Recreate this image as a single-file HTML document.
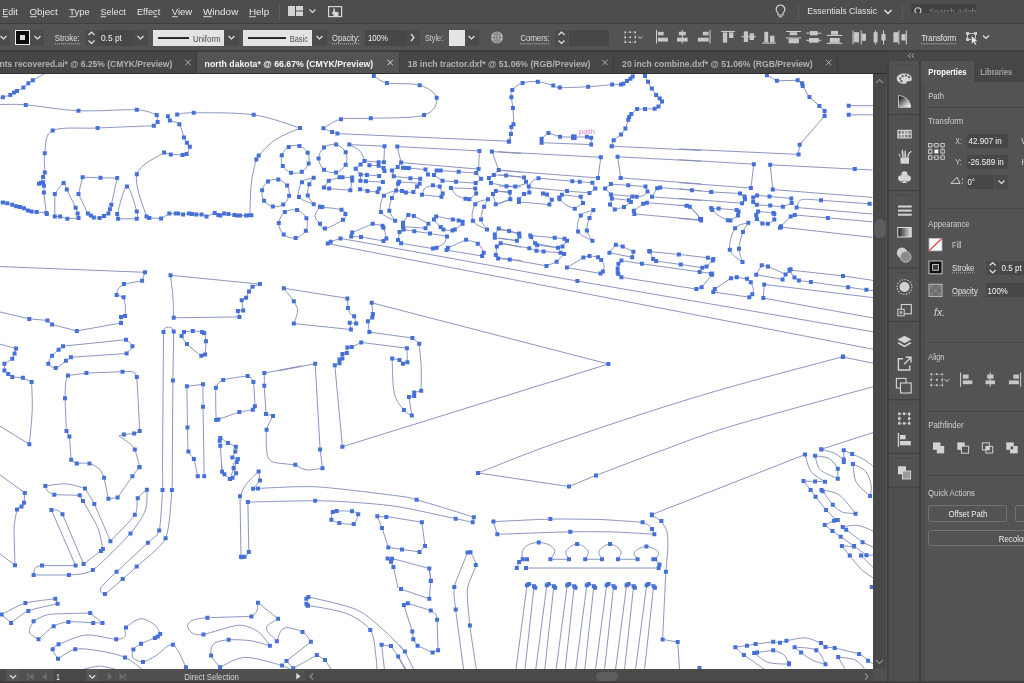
<!DOCTYPE html>
<html><head><meta charset="utf-8"><title>north dakota* @ 66.67% (CMYK/Preview)</title>
<style>
*{box-sizing:border-box;margin:0;padding:0}
html,body{width:1024px;height:683px;overflow:hidden;background:#535353;font-family:"Liberation Sans","DejaVu Sans",sans-serif;font-size:10px;color:#dcdcdc}
.a,.t,.r{position:absolute}
.t{white-space:nowrap}
u{text-decoration:underline;text-underline-offset:1px;text-decoration-thickness:1px}
.du{border-bottom:1px dotted #cfcfcf}
svg{position:absolute;overflow:visible}
</style></head><body>

<div class="r" style="left:0px;top:0px;width:1024px;height:24px;background:#4d4d4d;"></div>
<div class="r" style="left:279px;top:4px;width:1px;height:16px;background:#5c5c5c;"></div>
<div class="r" style="left:798px;top:4px;width:1px;height:16px;background:#5c5c5c;"></div>
<div class="r" style="left:902px;top:4px;width:1px;height:16px;background:#5c5c5c;"></div>
<div class="r" style="left:911px;top:4px;width:65px;height:8.500px;background:#414141;border-radius:1.500px 1.500px 0 0;overflow:hidden"><svg style="left:0;top:0" width="14" height="12"><circle cx="6.900" cy="6.700" r="3" fill="none" stroke="#cfcfcf" stroke-width="1.100"/></svg></div>
<svg style="left:0;top:0" width="1024" height="24"><rect x="288" y="6" width="7" height="10" fill="#d4d4d4"/><rect x="296" y="6" width="7" height="4.500" fill="#d4d4d4"/><rect x="296" y="11.500" width="7" height="4.500" fill="#d4d4d4"/>
<path d="M309.500 9.500 L312.500 12.500 L315.500 9.500" stroke="#dcdcdc" stroke-width="1.200" fill="none"/>
<rect x="328.600" y="6.600" width="13" height="10" fill="none" stroke="#d4d4d4" stroke-width="1.200"/>
<path d="M333.300 8.500 h1.600 v3 l3.600 0.800 v3.700 h-4.600 l-2.200-3.600 l1.600-0.700z" fill="#d4d4d4"/>
<path d="M780.500 5 a4.300 4.300 0 0 1 2.500 7.800 l0 2.200 l-5 0 l0-2.200 A4.300 4.300 0 0 1 780.500 5z" fill="none" stroke="#d6d6d6" stroke-width="1.100"/><path d="M778.800 16.800h3.400" stroke="#d6d6d6" stroke-width="1"/>
<path d="M884.500 10 L888 13.500 L891.500 10" stroke="#e0e0e0" stroke-width="1.500" fill="none"/>
</svg>
<div class="r" style="left:0px;top:24px;width:1024px;height:28px;background:#535353;"></div>
<div class="r" style="left:0px;top:23.3px;width:1024px;height:1.2px;background:#3e3e3e;"></div>
<div class="r" style="left:0px;top:50.3px;width:1024px;height:2px;background:#3e3e3e;"></div>
<div class="r" style="left:85px;top:30px;width:13px;height:16px;background:#4b4b4b;"></div>
<div class="r" style="left:98px;top:30px;width:35px;height:16px;background:#474747;"></div>
<div class="r" style="left:133px;top:30px;width:15px;height:16px;background:#4b4b4b;"></div>
<div class="r" style="left:153px;top:30px;width:71px;height:16px;background:#e3e3e3;"></div>
<div class="r" style="left:224px;top:30px;width:15px;height:16px;background:#4b4b4b;"></div>
<div class="r" style="left:243px;top:30px;width:69px;height:16px;background:#e3e3e3;"></div>
<div class="r" style="left:312px;top:30px;width:15px;height:16px;background:#4b4b4b;"></div>
<div class="r" style="left:364.5px;top:30px;width:41px;height:16px;background:#474747;"></div>
<div class="r" style="left:405.5px;top:30px;width:14px;height:16px;background:#4b4b4b;"></div>
<div class="r" style="left:448.5px;top:30px;width:16px;height:16px;background:#e4e4e4;"></div>
<div class="r" style="left:464.5px;top:30px;width:14px;height:16px;background:#4b4b4b;"></div>
<div class="r" style="left:555px;top:30px;width:13px;height:16px;background:#4b4b4b;"></div>
<div class="r" style="left:569px;top:30px;width:40px;height:16px;background:#474747;"></div>
<div class="r" style="left:0px;top:30px;width:10px;height:16px;background:#4b4b4b;"></div>
<div class="r" style="left:31px;top:30px;width:13px;height:16px;background:#4b4b4b;"></div>
<svg style="left:0;top:24px" width="1024" height="28" viewBox="0 24 1024 28"><g stroke="#e2e2e2" stroke-width="1.200" fill="none">
<path d="M0.500 36 L3.500 39 L6.500 36"/><path d="M34.500 36 L37.500 39 L40.500 36"/><path d="M137.500 36 L140.500 39 L143.500 36"/><path d="M228.500 36 L231.500 39 L234.500 36"/><path d="M316.500 36 L319.500 39 L322.500 36"/>
<path d="M411 34 L414 37.500 L411 41"/><path d="M468.500 36 L471.500 39 L474.500 36"/>
<path d="M88.500 35 L91.500 32 L94.500 35"/><path d="M88.500 40.500 L91.500 43.500 L94.500 40.500"/>
<path d="M558.500 35 L561.500 32 L564.500 35"/><path d="M558.500 40.500 L561.500 43.500 L564.500 40.500"/>
<path d="M983 35.500 L986 38.500 L989 35.500"/>
</g>
<rect x="15.500" y="30.500" width="14" height="14" fill="#0c0c0c" stroke="#e8e8e8" stroke-width="1"/><rect x="20" y="35" width="5" height="5" fill="#dadada"/>
<rect x="158" y="37.200" width="31" height="1.700" fill="#0c0c0c"/><rect x="248" y="37.200" width="38" height="1.700" fill="#0c0c0c"/>
<circle cx="497" cy="37.500" r="6" fill="#b4b4b4"/><path d="M497 31.500v12M491 37.500h12M492.800 33.500c3 2 5.600 2 8.400 0M492.800 41.500c3-2 5.600-2 8.400 0M497 31.500c-4 3-4 9 0 12M497 31.500c4 3 4 9 0 12" stroke="#6a6a6a" stroke-width="0.700" fill="none"/>
<!--GEN-->
<rect x="624.4" y="31.4" width="1.6" height="1.6" fill="#d6d6d6"/>
<rect x="624.4" y="36.4" width="1.6" height="1.6" fill="#d6d6d6"/>
<rect x="624.4" y="41.4" width="1.6" height="1.6" fill="#d6d6d6"/>
<rect x="629.4" y="31.4" width="1.6" height="1.6" fill="#d6d6d6"/>
<rect x="629.4" y="36.4" width="1.6" height="1.6" fill="#d6d6d6"/>
<rect x="629.4" y="41.4" width="1.6" height="1.6" fill="#d6d6d6"/>
<rect x="634.4" y="31.4" width="1.6" height="1.6" fill="#d6d6d6"/>
<rect x="634.4" y="36.4" width="1.6" height="1.6" fill="#d6d6d6"/>
<rect x="634.4" y="41.4" width="1.6" height="1.6" fill="#d6d6d6"/>
<path d="M625.2 32.2h10.0v10.0h-10.0z" fill="none" stroke="#bdbdbd" stroke-width="0.8" stroke-dasharray="1 1.2"/>
<path d="M638.2 36.4l2 2l2-2" fill="none" stroke="#d6d6d6" stroke-width="1"/>
<rect x="656.0" y="29.9" width="1" height="13.6" fill="#d2d2d2"/>
<rect x="657.9" y="31.8" width="5.8" height="3.5" fill="#c6c6c6"/>
<rect x="657.9" y="37.7" width="10.1" height="3.9" fill="#c6c6c6"/>
<rect x="681.8" y="29.9" width="1" height="13.6" fill="#d2d2d2"/>
<rect x="678.8" y="31.8" width="7.0" height="3.5" fill="#c6c6c6"/>
<rect x="677.0" y="37.7" width="10.7" height="3.9" fill="#c6c6c6"/>
<rect x="709.5" y="29.9" width="1" height="13.6" fill="#d2d2d2"/>
<rect x="702.8" y="31.8" width="5.8" height="3.5" fill="#c6c6c6"/>
<rect x="697.9" y="37.7" width="10.7" height="3.9" fill="#c6c6c6"/>
<rect x="721.0" y="30.9" width="14.0" height="1" fill="#d2d2d2"/>
<rect x="722.9" y="32.4" width="4.3" height="10.2" fill="#c6c6c6"/>
<rect x="729.0" y="32.4" width="4.4" height="5.6" fill="#c6c6c6"/>
<rect x="741.3" y="36.2" width="14.7" height="1" fill="#d2d2d2"/>
<rect x="743.8" y="31.4" width="4.2" height="10.6" fill="#c6c6c6"/>
<rect x="749.6" y="33.4" width="4.4" height="6.6" fill="#c6c6c6"/>
<rect x="762.0" y="42.6" width="14.0" height="1" fill="#d2d2d2"/>
<rect x="764.3" y="31.8" width="3.9" height="10.7" fill="#c6c6c6"/>
<rect x="770.0" y="35.7" width="4.5" height="6.8" fill="#c6c6c6"/>
<rect x="786.0" y="31.0" width="15.0" height="1" fill="#d2d2d2"/>
<rect x="786.0" y="37.5" width="15.0" height="1" fill="#d2d2d2"/>
<rect x="789.7" y="32.2" width="7.5" height="3.0" fill="#c6c6c6"/>
<rect x="788.6" y="38.6" width="10.3" height="4.7" fill="#c6c6c6"/>
<rect x="806.2" y="32.7" width="15.0" height="1" fill="#d2d2d2"/>
<rect x="806.2" y="39.8" width="15.0" height="1" fill="#d2d2d2"/>
<rect x="810.0" y="31.0" width="7.6" height="4.4" fill="#c6c6c6"/>
<rect x="809.0" y="38.0" width="9.7" height="4.7" fill="#c6c6c6"/>
<rect x="826.8" y="34.9" width="15.5" height="1" fill="#d2d2d2"/>
<rect x="826.8" y="42.8" width="15.5" height="1" fill="#d2d2d2"/>
<rect x="831.0" y="30.9" width="7.0" height="3.9" fill="#c6c6c6"/>
<rect x="829.8" y="38.0" width="9.9" height="4.8" fill="#c6c6c6"/>
<rect x="852.5" y="30.4" width="1" height="14.0" fill="#d2d2d2"/>
<rect x="860.7" y="30.4" width="1" height="14.0" fill="#d2d2d2"/>
<rect x="853.8" y="32.2" width="5.2" height="10.1" fill="#c6c6c6"/>
<rect x="862.0" y="33.7" width="4.0" height="7.1" fill="#c6c6c6"/>
<rect x="875.1" y="30.4" width="1" height="14.0" fill="#d2d2d2"/>
<rect x="883.0" y="30.4" width="1" height="14.0" fill="#d2d2d2"/>
<rect x="873.6" y="32.2" width="4.0" height="10.1" fill="#c6c6c6"/>
<rect x="881.4" y="34.1" width="4.2" height="6.4" fill="#c6c6c6"/>
<rect x="898.3" y="30.4" width="1" height="14.0" fill="#d2d2d2"/>
<rect x="905.8" y="30.4" width="1" height="14.0" fill="#d2d2d2"/>
<rect x="893.4" y="32.2" width="4.8" height="10.1" fill="#c6c6c6"/>
<rect x="901.4" y="34.1" width="4.2" height="6.4" fill="#c6c6c6"/>
<rect x="967.5" y="33.500" width="8" height="6" fill="none" stroke="#c8c8c8" stroke-width="1"/>
<rect x="966" y="32" width="3" height="3" fill="#c8c8c8"/>
<rect x="974" y="32" width="3" height="3" fill="#c8c8c8"/>
<rect x="966" y="38" width="3" height="3" fill="#c8c8c8"/>
<path d="M971.5 35.500v8.500l2-1.800l1.500 3l1.500-0.800l-1.400-2.800l2.700-0.200z" fill="#e8e8e8" stroke="#535353" stroke-width="0.500"/>
</svg>
<div class="r" style="left:0px;top:52.2px;width:886.5px;height:21px;background:#464646;"></div>
<div class="r" style="left:197px;top:52.2px;width:201.5px;height:20.6px;background:#535353;"></div>
<div class="r" style="left:196.3px;top:52.2px;width:1px;height:20.6px;background:#3e3e3e;"></div>
<div class="r" style="left:398.5px;top:52.2px;width:1px;height:20.6px;background:#3e3e3e;"></div>
<div class="r" style="left:612.5px;top:52.2px;width:1px;height:20.6px;background:#3e3e3e;"></div>
<div class="r" style="left:836.5px;top:52.2px;width:1px;height:20.6px;background:#3e3e3e;"></div>
<svg style="left:0;top:52px" width="886" height="21" viewBox="0 52 886 21"><g stroke-width="1" fill="none"><path stroke="#b4b4b4" d="M185.25 59.800l5.400 5.400M190.75 59.800l-5.400 5.400"/><path stroke="#e0e0e0" d="M387.45 59.800l5.400 5.400M392.95 59.800l-5.400 5.400"/><path stroke="#b4b4b4" d="M602.25 59.800l5.400 5.400M607.75 59.800l-5.400 5.400"/><path stroke="#b4b4b4" d="M825.95 59.800l5.400 5.400M831.45 59.800l-5.400 5.400"/></g></svg>
<div class="r" id="canvas" style="left:0;top:73px;width:873px;height:595.500px;background:#fff;overflow:hidden">
<svg style="left:0;top:0" width="873" height="595" viewBox="0 73 873 595">
<path fill="none" stroke="#808ab8" stroke-width="0.9" d="M-2.9 99.3 C-2 99 0.7 98 2.9 97.2 C5.1 96.5 8.4 95.7 10.3 94.9 C12.1 94.1 12.9 93.2 14.1 92.6 C15.2 91.9 15.4 91.9 17 91.1 C18.6 90.3 21.5 88.9 23.4 87.6 C25.3 86.3 26.9 84.4 28.4 83.2 C30 82 30.2 81.8 32.8 80.3 C35.4 78.7 41.1 75.6 43.9 74.1 C46.8 72.6 48.8 71.9 49.8 71.5 M-1.5 104.6 C3.1 104.6 12.5 103.8 25.8 104.9 C39.1 105.9 60 109.9 78.5 110.7 C97 111.6 123.8 109.1 136.8 109.8 C149.9 110.6 153.4 114.2 156.7 115.1 M156.7 115.1 C156.9 116.3 158.1 120.4 157.6 122.1 C157.1 123.9 154.4 125.1 153.8 125.7 M153.8 125.7 C144.4 126.1 114.4 127.2 97.6 128 C80.7 128.8 61.5 126.4 52.7 130.6 C43.9 134.8 46.1 146.2 44.8 153.2 C43.5 160.2 45.1 168.6 44.8 172.5 C44.5 176.5 43.7 175.2 43.1 176.9 C42.4 178.6 40.9 181.3 41 182.8 C41.2 184.3 43.5 184.1 43.9 185.7 C44.4 187.3 43.6 187.9 43.9 192.5 C44.3 197 45.9 209.6 46.3 213 M39 183.7 L43.1 182.2 M-1.5 201.8 C-0.7 201.9 1.5 202.2 2.9 202.4 C4.4 202.7 5.8 202.9 7.3 203.3 C8.9 203.7 10.8 204.3 12.3 204.8 C13.8 205.3 14.8 205.8 16.1 206.2 C17.4 206.6 18.6 206.8 19.9 207.1 C21.2 207.5 22.7 207.7 24 208.3 C25.3 208.9 26.6 210.1 27.8 210.6 C29.1 211.2 30.2 211.3 31.6 211.5 C33.1 211.7 34.2 211.8 36.6 212.1 C39.1 212.3 44.6 212.6 46.3 213 C48 213.3 46.8 213.9 46.9 214.1 M54.8 216.5 L54.8 193.9 M54.8 193.9 C56.2 192.1 61.6 183.8 63.6 183.1 C65.6 182.4 64.8 185.4 66.8 189.5 C68.8 193.6 73.8 203.7 75.6 207.7 C77.4 211.7 77.1 211.8 77.6 213.6 C78.1 215.3 78.4 217.2 78.5 217.9 M54.8 216.5 L60.1 216.5 L67.4 218.8 L78.5 217.9 M78.5 193.9 L82.6 177.2 M82.6 177.2 L100.5 177.8 L117.2 178.1 M117.2 178.1 C116.2 182.5 112.5 199.6 111.3 204.8 C110.1 209.9 110.4 207.7 109.9 209.2 C109.4 210.6 109.4 212.4 108.4 213.6 C107.4 214.7 105.5 215.2 104 215.9 C102.5 216.6 101.3 217.7 99.6 217.9 C97.9 218.2 95.2 217.8 93.8 217.4 C92.3 217 91.8 216.2 90.8 215.6 C89.8 215 89.9 217.2 87.9 213.6 C85.8 209.9 80.1 197.2 78.5 193.9 M117.2 214.1 C118.8 209.6 123.6 187 126.9 186.6 C130.1 186.2 135.2 206.1 136.8 211.5 C138.5 216.9 136.8 217.6 136.8 218.8 M136.8 218.8 L118.1 218.8 L117.2 214.1 M164.1 152.6 C159.5 156.2 139.7 163.7 136.8 174.3 C133.9 184.9 144.4 209.2 146.5 216.5 C148.6 223.8 148.9 217.7 149.4 217.9 M149.4 217.9 L161.1 218.5 L169.3 213.6 L175.8 213.6 L178.1 213.6 L183.1 214.4 L189 213.6 L191.9 214.1 L196.3 214.4 L201.6 214.4 L206.5 216.5 L214.7 213 L218.3 215 L220.3 215.6 L224.1 213.6 L228.5 214.1 L234.4 215 L237.3 215.6 L240.2 215.6 L246.1 215.6 L251.4 215.3 M164.1 152.6 L170.8 154.4 L182.5 155 L186.6 154.1 M186.6 154.1 C187.2 152.9 189.8 148.7 189.8 146.8 C189.9 144.9 187.9 144.2 186.9 142.7 C185.9 141.1 185.3 140.5 184 137.4 C182.7 134.3 181.6 127 179.3 124.2 C177 121.4 171.8 121.7 169.9 120.4 C168 119.1 168.2 117 167.9 116.3 M177.2 114.5 C180 114.2 180.9 112.7 193.7 112.8 C206.4 112.8 236 112.3 253.7 114.8 C271.4 117.4 292.3 125.8 300 128 M300 128 C295.9 130 282.3 135.1 275.4 139.7 C268.5 144.3 261.9 152.3 258.7 155.5 C255.5 158.8 257.6 154.8 256.3 159.4 C255.1 163.9 252.4 173.5 251.4 182.8 C250.3 192.1 250.1 209.9 249.9 215.3 M373.8 75.9 C375.9 77 379.3 81.3 386.9 82.9 C394.6 84.5 411.4 82.7 419.7 85.2 C428 87.7 436 92.9 436.7 97.8 C437.5 102.8 435.1 111.7 424.1 115.1 C413.2 118.5 384.7 117.7 370.8 118.3 C357 119 348.8 117.6 340.9 119.2 C333 120.9 326.3 126.8 323.4 128.3 M323.4 128.3 L332.1 132.1 L337.4 133.6 M634.5 68.5 C634.2 69.9 633.4 74.7 632.7 76.4 C632.1 78.2 631.4 78 630.4 78.8 C629.4 79.6 628 80.3 626.9 81.1 C625.7 82 624.3 83.2 623.4 83.8 C622.4 84.4 622.9 84.5 621 84.6 C619.2 84.8 617.7 84.3 612.2 84.6 C606.8 85 596.9 86.2 588.2 86.7 C579.5 87.2 565.6 87.8 559.8 87.6 C554 87.4 557 86.5 553.3 85.5 C549.7 84.6 542.9 82.2 537.8 81.7 C532.7 81.3 526.8 81.5 522.6 82.9 C518.3 84.3 514.2 87.5 512.3 89.9 C510.5 92.3 511.3 94.2 511.4 97.2 C511.5 100.3 512.6 103.6 512.9 108.1 C513.3 112.6 513.7 121 513.5 124.2 C513.3 127.4 511.9 125.5 511.4 127.1 C511 128.7 511.2 131.5 510.9 133.9 C510.5 136.2 509.4 140 509.1 141.2 M337.4 133.6 L509.1 141.2 M308.7 163.5 C307.7 166.7 304.7 170.2 301.8 171.8 C298.9 173.3 294.2 173.8 291.1 172.8 C287.9 171.8 284.3 168.8 282.8 165.9 C281.2 163 280.8 158.4 281.8 155.2 C282.8 152 285.7 148.5 288.7 146.9 C291.6 145.4 296.2 144.9 299.4 145.9 C302.6 146.9 306.1 149.9 307.7 152.8 C309.2 155.7 309.6 160.3 308.7 163.5Z M289.1 195.8 C288.5 199 285.9 202.7 283.2 204.5 C280.5 206.3 276.1 207.2 272.9 206.5 C269.7 205.9 265.9 203.4 264.1 200.7 C262.3 197.9 261.5 193.5 262.1 190.3 C262.8 187.1 265.3 183.4 268 181.6 C270.7 179.8 275.2 178.9 278.3 179.6 C281.5 180.2 285.3 182.7 287.1 185.4 C288.9 188.1 289.7 192.6 289.1 195.8Z M305.8 230.7 C304 234 299.3 237.3 295.7 237.9 C292 238.6 286.5 237 283.7 234.6 C280.9 232.1 278.7 226.8 278.8 223.1 C279 219.3 281.8 214.3 284.8 212.1 C287.9 210 293.5 209 297.1 210 C300.7 211 305 214.8 306.4 218.3 C307.9 221.7 307.6 227.4 305.8 230.7Z M313.7 177.8 C311.7 178.5 304.4 179 302 182.2 C299.5 185.4 297.1 193.2 299 196.9 C301 200.5 311.2 203 313.7 204.2 M313.7 177.8 C313 178.9 310.3 181.3 309.3 184.3 C308.3 187.2 307.1 192.1 307.8 195.4 C308.6 198.7 312.7 202.7 313.7 204.2 M345.7 164.7 C344.1 168.1 339.7 171.6 336 172.4 C332.4 173.2 326.9 172 324 169.7 C321.1 167.3 318.6 162.2 318.6 158.5 C318.6 154.8 321.1 149.7 324 147.4 C326.9 145 332.5 143.8 336.1 144.6 C339.7 145.5 344.1 149 345.7 152.3 C347.4 155.7 347.3 161.4 345.7 164.7Z M349.3 144.6 L384.5 146.2 L383.9 162.2 M349.3 144.6 C351.1 145.7 357.5 148.4 360 151.1 C362.6 153.8 363.8 159.2 364.5 160.9 M364.5 160.9 L378.6 162.2 L383.9 162.2 M364.5 160.9 L360.6 164.6 L355.7 168.7 L360.6 174.5 M369.4 165.2 L378.6 165.7 L383.5 168.1 L384.5 171 M360.6 174.5 L366.9 174.9 L379.2 175.9 M360.4 180.8 L365.9 181.2 L382.9 182.1 M360.6 174.5 L360.4 180.8 M360 189.2 L367.5 190.9 L377.6 192.1 L379.2 188.6 M328.8 180.8 L339.5 177.3 L342.5 177.3 L352.2 177.5 L352.2 180.4 L350.3 190.2 L329.2 188.6 L323.9 187.6 L328.8 180.8 M397.3 146.6 L479.4 150.9 L478.6 169.1 M397.3 146.6 L401.1 162.6 L478.6 169.1 M401.1 162.6 L397.7 167.1 L391.9 170.6 L393.8 176.3 L410.4 178.2 L420.2 178.8 L419.6 183.7 L417.1 186.6 L413.4 192.1 L405.9 192.5 L402 191.1 L396.2 190.5 M403 167.7 L405.9 168.1 L408.9 168.1 L425.5 169.6 L428 174.5 M399.1 181.8 L398.1 183.7 L396.2 190.5 M399.1 181.8 L417.1 183.1 M433.9 174.9 L436.6 170.6 L440.7 170.6 L458.7 171.8 L476.2 173 L481.1 178.8 L475.7 183.1 M433.9 174.9 L442.5 180.8 L456.1 181.8 L475.7 183.1 M422 194.8 C422.4 193.8 422.7 190.2 424.5 188.6 C426.3 187 431.5 185.8 432.9 185.3 M432.9 185.3 L439.7 186.6 L442.7 193.5 L441.5 196.8 L422 194.8 M450.9 188 C451.8 189.2 454.3 193.6 456.7 195.4 C459.2 197.2 464 198.2 465.5 198.8 M465.5 198.8 L469.4 199.3 L476.2 193.5 L475.3 188.6 L450.9 188 M491.9 151.5 L521.2 153.6 M491.9 151.5 L498.7 170 L493.8 174.9 L488.9 177.9 L490.9 183.1 L506.5 186.2 L515.3 186.6 L521.2 187 M498.7 170 L521.2 172.2 M493.8 174.9 L506.1 175.5 L521.2 176.9 M495.8 190.9 L509.8 192.1 L510.4 199.3 L495.8 204.2 L492.9 194.1Z M488 199.3 C485.9 200.1 477.8 200.6 475.3 204.2 C472.8 207.8 471 216.6 472.9 220.8 C474.9 225.1 484.6 228.1 487 229.6 M488 199.3 C487.3 200.6 485.2 203.4 484.1 206.8 C482.9 210.1 480.6 215.6 481.1 219.5 C481.6 223.3 486 227.9 487 229.6 M396.2 190.5 C394.1 191.4 386.4 192.2 383.9 195.8 C381.3 199.4 379 207.9 380.9 212 C382.8 216.2 392.8 219.4 395.2 220.8 M396.2 190.5 C395.5 191.8 393 194.6 391.9 198 C390.7 201.3 388.8 206.9 389.3 210.7 C389.9 214.5 394.2 219.1 395.2 220.8 M320 206.8 C321.2 205.3 318.8 206.7 322.3 207.1 C325.9 207.6 337.6 208.5 341.5 209.7 C345.3 210.8 345.1 212.3 345.4 214 C345.7 215.7 346.5 217.4 343 219.8 C339.6 222.3 328.7 228 324.9 228.6 C321 229.3 321.6 225.9 320 223.8 C318.4 221.6 315.1 218.8 315.1 215.9 C315.1 213.1 318.8 208.2 320 206.8Z M352.2 232.5 L372.7 223.8 L382.5 225.7 L383.5 227.7 M383.5 227.7 C384 229.4 386.4 236.2 386.4 238.4 C386.4 240.6 384 240.5 383.5 240.9 M383.5 240.9 L361 237 L351.2 236.4 L352.2 232.5 M408.3 215 C409.2 215.1 410.4 214.5 413.8 215.9 C417.1 217.4 426 222.4 428.4 223.8 M428.4 223.8 L425.5 228.2 L403 226.7 M408.3 215 L403 222.8 L403 226.7 L403.6 229.6 L399.5 232.1 L398.1 240 L401.1 243.3 L432.9 248.6 L436.6 247.8 M436.6 247.8 C437.8 247 442.3 245.2 444 243.3 C445.7 241.4 446.5 237.6 447 236.4 M447 236.4 L430 233.5 L414.3 231.2 L403.6 229.6 M433.9 219.5 C433.4 218.4 434.3 216.5 436.2 216.5 C438.1 216.5 450.6 219.1 452.8 219.5 C455.1 219.8 457.7 220.2 458.7 220.4 C459.6 220.7 462.2 221.5 462.6 221.8 C463 222.1 463.4 223 462.6 223.8 C461.8 224.5 455.8 228.9 454.8 229.6 C453.8 230.3 453.6 230.6 452.4 230.6 C451.3 230.6 444.6 230 443.4 229.6 C442.3 229.3 441.7 228.1 440.7 227.1 C439.7 226.1 434.3 220.5 433.9 219.5Z M446.6 250.1 L447.9 247.8 L466.1 239.8 M466.1 239.8 C468 240.4 474.9 241.5 477.8 243.7 C480.7 245.8 483 250.6 483.7 252.7 C484.4 254.7 482.4 255.4 482.1 256 M482.1 256 L446.6 250.1 M498.7 228.6 L509.1 231 L519.2 233.5 M498.7 228.6 L494.8 234.5 L494.8 237.8 L516.9 240.7 M521.2 247.2 L500.7 243.3 L496.8 246.6 L495.8 255 L498.1 258.5 L509.8 259.5 L521.2 260.5 M511.1 133.9 L508.8 141.7 M541.6 142.7 L591.2 144.6 L591.2 137.8 L586.9 136.8 L573.8 137.2 L560 136.8 L548.4 132.9 M548.4 132.9 C547.9 133.4 542.2 138 541.6 138.8 C541 139.6 541.6 142.4 541.6 142.7 M498 151.7 L600.8 157.3 L598 177.9 L498 170.2 M701.2 161.2 L617.6 156.8 L620.7 177.9 L701.2 183.9 M611.9 146.2 L701.2 150.5 M499 174.9 L505.9 175.5 L524 177.5 L526 181.8 L528.7 186.6 L529.3 192.5 L524 194.1 L518.9 199.3 L518.9 201.9 L549.4 204.6 L551.8 199.7 L546.9 194.5 L543 193.5 M528.7 186.6 C529.3 185.7 530.6 182.6 532.2 181.2 C533.9 179.8 537.4 178.7 538.5 178.2 M538.5 178.2 L572.3 181.2 L579.7 181.8 L592.4 182.7 L595.3 188.6 L589.5 192.9 L567 191.1 L529.3 187.6 M499 186.1 L506.4 186.2 L515.2 186.6 L526 183.7 M499 191.5 L509.8 192.5 L510.2 199.3 L499 203.8 M561.9 194.8 L559.2 197.4 L559.6 199.3 M561.9 194.8 L580.7 196.8 L583 202.9 L574.8 208.7 M559.6 199.3 C560.7 200.3 563.9 203.6 566.4 205.2 C568.9 206.8 573.4 208.1 574.8 208.7 M593.4 210.1 C591.2 211 583.2 212 580.7 215.5 C578.1 219.1 576.2 227.4 578.1 231.6 C580.1 235.8 590 239.2 592.4 240.7 M593.4 210.1 C592.7 211.4 590.5 214.5 589.5 217.9 C588.4 221.3 586.4 226.8 586.9 230.6 C587.4 234.4 591.5 239 592.4 240.7 M610.9 184.1 L605.1 188.6 L610.9 194.5 L611.9 198.4 L610 204.6 L614.8 209.5 L624 207.1 L630.9 201.9 L628.9 200.3 M610.9 184.1 L628.3 185.3 L645.5 186.6 L647.5 191.5 M647.5 191.5 C646.8 192.2 645.3 194.6 643.6 195.4 C641.8 196.3 638.6 196.6 636.7 196.8 C634.9 197 633.1 196.5 632.4 196.4 M610.9 194.5 L632.4 196.4 M611.9 198.4 L628.9 200.3 M660.2 187.6 L657.2 188.2 L652 196.8 L701.2 200.5 M660.2 187.6 L692 190.2 L701.2 190.9 M634.4 214 L633.8 210.7 L643.2 203.8 L646.9 202.7 L686.5 205.8 L689.8 206.8 M689.8 206.8 C690.9 207.8 694.6 211 696.3 213 C698 215 699.4 217.9 700 218.9 M634.4 214 L701.2 220 M499 229.6 L508.8 231 L518.9 234.1 L519.5 236.4 L517 240.7 L499 238 M530.3 235.5 L554.7 237.8 L564.5 238.8 L567 240.7 L562.5 246.6 L558 247.8 L535.2 243.3 L531.2 237 L530.3 235.5 M535.2 243.3 L537.1 245.2 L558 247.8 M499 242.9 L529.3 248.2 L536.5 250.7 L543.6 251.5 L560.5 252.7 L564.1 254 L556.6 261.8 L546.5 265.9 M499 257.9 L509.8 259.3 L546.5 265.9 M609.4 252.7 L615.8 244.8 L622.7 246.6 L633.4 251.7 L632.2 257.3 L609.4 252.7 M566.9 267.6 L583.4 257.5 M583.4 257.5 C584.4 257.3 587 256 589.5 256 C591.9 255.9 596.1 256.7 598 257.3 C600 258 600.2 258.5 601.2 259.9 C602.2 261.3 603.8 263.8 604.1 265.7 C604.4 267.7 603.1 270.5 602.9 271.4 M679 148.9 L798.6 154.4 M679 159.7 L753.8 164.2 L750.9 188 L679 182.7 M872.4 170 L854.8 169.1 L770.2 164.8 L772.8 189.6 L872.4 197.4 M679 188.6 L692.1 190.2 L711.2 191.9 L740 193.5 L744.5 196.4 L745 199.3 L742.1 203.2 L679 198.4 M679 205.2 L686.8 205.8 L689.8 206.8 L701.1 218.9 L701.1 220.4 L679 218.5 M711.2 208.1 L712.2 210.1 M711.2 208.1 L718.7 208.5 L736.6 210.1 L738.6 211.6 L738 215.5 L730.4 220.4 L727.9 220.2 M712.2 210.1 C713.4 211.1 716.5 214.2 719.1 215.9 C721.7 217.6 726.4 219.5 727.9 220.2 M757.1 195.4 L753.2 197.4 L753.2 201.9 L756.8 204.8 L770.2 205.6 L782.9 206.8 L791.7 202.9 L791.3 198.4 L769.5 196.4 L757.1 195.4 M758.1 211.6 C756.1 211.9 756.3 214.1 756.2 215 C756 215.8 756 217.9 756.8 218.9 C757.5 219.8 761.1 222.8 762.4 223.4 C763.7 223.9 766.5 224.2 767.9 223.8 C769.3 223.3 773.6 220.6 774.3 219.5 C775.1 218.3 774.4 214.7 774.3 214 C774.2 213.2 775.3 213.3 773.4 213 C771.5 212.7 760.1 211.4 758.1 211.6Z M748.4 222.8 C746.1 223.7 738.2 223.8 735.1 228.2 C732 232.7 728.6 244.1 729.8 249.7 C731 255.4 740.4 260 742.5 262 M748.4 222.8 C747.4 224.3 744.5 227.8 742.9 232.1 C741.3 236.5 739 243.8 739 248.8 C738.9 253.7 741.9 259.8 742.5 262 M796.6 207.5 C797 206.5 797.7 202.7 799.1 201.3 C800.5 199.9 801.4 199.5 805 199.3 C808.6 199.2 818.3 200.1 821 200.3 M821 200.3 L869.5 203.8 L872.4 204 M796.6 207.5 L872.4 214 M780 227.7 L781 226.3 L790.7 216.5 L794.8 215 L827.9 217.9 L872.4 221.8 M781 227.1 L872.4 237.4 M611.6 146.2 C611.8 145.6 612.8 141.5 613.7 140.3 C614.6 139.1 619.8 135.6 621 134.5 C622.2 133.3 624.7 130.1 625.4 128.6 C626.1 127.1 628 121 628.3 119.8 C628.7 118.6 628.9 117.5 629.2 116.9 C629.5 116.3 630.5 114.7 631.3 113.9 C632.1 113.2 636.5 109.5 637.1 109 M637.1 109 L645 109 L654.7 108.7 M654.7 108.7 C655.1 108.5 657.8 107.3 658.5 106.6 C659.2 105.9 661.9 102.5 662 101.6 C662.1 100.8 660.3 99.1 659.7 98.4 C659.1 97.7 657 95.9 656.2 94.9 C655.4 93.9 652.6 89.8 651.8 88.5 C651 87.1 648.6 83 648 81.7 C647.3 80.5 645.4 77.2 645 75.9 C644.6 74.5 644 69.3 643.9 68.5 M761.6 71.5 C762.5 72.1 764.4 73.7 766.9 75.3 C769.5 76.8 775.2 79.9 776.9 80.8 M776.9 80.8 L797.7 80.3 L802.1 83.2 L802.7 86.1 L809.4 97 L819.4 106 L824.6 111 L824.6 116 L799.7 144.7 L798.3 154.4 M873 105.7 L848.7 105.7 M873 114.8 L848.7 114.8 M-1.5 266.5 L145 272.3 L142.1 280.8 L123.9 284.1 M123.9 284.1 C122.9 284.9 119.3 287.2 118.1 289 C116.8 290.8 116.8 293.9 116.6 294.9 M116.6 294.9 L123.6 297.2 M123.6 297.2 C123.9 298.8 125.1 303.5 125.4 306.6 C125.6 309.7 125.1 314.4 125.1 316 M125.1 316 L121 316.9 L121 323 L76.8 330.9 L52.1 324.5 L47.5 320.4 L29.3 318.9 L-1.5 311.6 M170.5 275.3 L259.9 284.1 L252.5 286.7 L249 291.4 L246.1 297.8 L241.7 300.2 L243.2 310.4 L237.9 311 L239.4 316.9 L173.7 317.8 M173.7 317.8 C173.6 314.2 173.4 303.4 172.9 296.4 C172.3 289.3 170.9 278.8 170.5 275.3 M-1.5 343.8 L16.1 348.5 L14.6 353.5 L12.3 358.8 L4.4 363.8 L4.4 370.5 L8.2 374 L12.3 376.9 L22.9 377.8 L31.6 381.9 M31.6 381.9 C31.7 386.7 32.6 400.2 32.2 410.6 C31.8 421 29.8 438.7 29.3 444.3 M29.3 444.3 L-1.5 425.3 M63 346.2 L126 339.7 M126 339.7 C127.1 340.8 132.3 343.9 132.4 346.2 C132.5 348.5 127.5 352.3 126.6 353.5 M126.6 353.5 L70.9 357.3 L65.9 360.8 M65.9 360.8 C64.6 361.8 58 367.8 55.7 368.1 C53.3 368.5 48.8 365.4 48.3 363.8 C47.9 362.1 50.8 357.7 52.1 355.8 C53.5 354 57.1 351 58.6 349.7 C60 348.4 62.4 346.6 63 346.2 M65 398.3 C65.1 397 65.4 384.7 65.6 382.8 C65.9 380.9 67.8 376.1 68 375.5 M68 375.5 L86.4 373.1 L122.5 371.7 M122.5 371.7 C124.3 371.7 130.9 371.1 133.3 372 C135.7 372.8 136.2 376.1 136.8 376.9 M136.8 376.9 C136.9 379 138 397.3 138.3 401.8 C138.5 406.4 139.6 428.7 139.7 431.1 M139.7 431.1 L134.2 433.5 L123.9 434.6 L118.9 436.1 M118.9 436.1 C120.3 437 126.8 441.1 128.9 442.9 C131 444.6 133.3 446.4 134.8 449.6 C136.2 452.8 139.1 464.6 139.7 466.9 M65 398.3 C65.1 400.5 66.2 428.6 66.5 431.1 C66.8 433.7 69.1 434.5 69.4 436.4 C69.7 438.3 70.7 458 71.2 459.8 C71.7 461.6 76.4 463.1 76.8 463.4 M162.5 465 L163.5 332.1 M163.5 332.1 C163.7 331.5 163.8 329.1 164.6 328.3 C165.5 327.5 167.2 327.1 168.5 327.1 C169.7 327.1 171.4 327.6 172.3 328.3 C173.1 329 173.5 331 173.7 331.5 M173.7 331.5 L172.9 380.4 L172.3 465 M184 332.1 C182.9 332.6 181.3 334.7 181.6 335.9 C181.9 337.1 185 342.1 186.9 344.1 C188.9 346.1 199.5 354.8 201.3 355.8 C203.1 356.9 204.6 355.8 205.1 354.4 C205.5 352.9 206 343.3 206 341.2 C205.9 339.1 204.6 333.9 204.2 333 C203.8 332.1 203.3 332.3 202.1 332.1 C201 331.9 194.6 330.9 192.8 330.9 C191 330.9 185.1 331.6 184 332.1Z M186.9 386.3 L203 384.3 M203 384.3 C203 385.4 203 402.2 203 406.8 C203.1 411.4 204.1 472.8 204.2 476.2 M186.9 386.3 C187 389.8 187.4 422.2 187.5 427.6 C187.6 433.1 187.8 449 188.4 451.6 C188.9 454.3 193.2 456.9 193.9 459 C194.7 461 197.4 474.8 197.8 476.2 M223.2 379.9 C225.9 378.9 245 375.9 247.6 376.1 C250.1 376.2 252.8 379.4 253.4 381.9 C254 384.4 254.9 403.9 254.9 406.2 C254.8 408.5 254.1 409.3 252.8 409.7 C251.5 410.2 242.2 411.3 239.4 412.1 C236.5 412.9 220.2 418.8 218.3 419.4 C216.3 420.1 216.4 422.6 216.2 420 C216 417.4 215.3 391.1 215.9 387.8 C216.5 384.4 220.6 380.8 223.2 379.9Z M301.8 365.8 L264.3 373.1 L264.3 385.7 M264.3 385.7 L266 414.1 M266 414.1 L273 415.9 M273 415.9 C272.3 417.5 267.3 425.3 266.6 429.7 C265.9 434 266.2 449.3 266.9 453.1 C267.6 456.9 269.1 460.5 272.5 461.9 C275.8 463.3 292.6 464.5 295.3 464.8 M220.3 437.9 L219.7 440.8 L220.3 445.8 M220.3 437.9 L227.9 442.9 L235.8 446.7 L235.3 451.6 L232.3 457.5 L237.9 459 L236.7 461.9 L233.8 468.3 L231.4 475.1 M220.3 445.8 L222.1 471.9 M283.8 288.2 L347.4 298.4 L348 308.1 M348 308.1 C348.4 309.1 349.3 312.6 350.3 313.9 C351.3 315.3 353.5 315.9 354.1 316.3 M354.1 316.3 L356.2 323.6 L349.7 322.7 L350.9 329.5 L293.8 323.6 M293.8 323.6 C294.4 321.5 297.6 314.7 297.6 311 C297.6 307.3 296.1 305.2 293.8 301.3 C291.5 297.5 285.5 290.4 283.8 288.2 M371.7 302.8 L608.4 364 M371.7 302.8 L372.9 313.9 L372.3 317.5 L367.9 321.3 L369.4 332.1 L412.4 338 L419.2 343.8 M419.2 343.8 C419.3 345.4 421.1 363.6 421.2 366.7 C421.3 369.8 421.2 389.1 421.2 390.7 M421.2 390.7 L414.2 392.5 L414.2 396 L408.9 396.9 L411.8 415.6 M411.8 415.6 C410.5 414.7 406.9 413.8 403.9 410 C401 406.3 396.2 401.6 394.3 393 C392.3 384.5 392.5 364.2 392.2 358.5 M392.2 358.5 L399.5 359.9 L403 363.8 L407.4 362.3 L406.9 348.2 L361.2 342.4 L351.8 347.1 L347.4 347.6 L346.8 352.9 L342.4 354.1 L342.4 358.5 L339.5 359.4 L339.5 363.2 L334.8 365.2 L342.4 446.7 L608.4 364 M278.5 370.8 L315.2 363.8 L320.1 449.6 L322.5 468.3 M322.5 468.3 C319.8 468.6 310.9 470.4 306.4 469.8 C301.8 469.2 297.1 465.7 295.2 464.8 M566.9 267.6 L600.5 273.5 L602.9 271.5 M713.3 292 L714.8 289 L730.9 278.2 L736.7 277.3 L747 278.8 L750.8 282.3 M750.8 282.3 C751.2 283.4 753.2 287 753.4 289 C753.7 291 752.5 293.4 752.3 294.3 M752.3 294.3 L749.3 297.2 L713.3 292 M842.8 357 L873 363.2 M651.8 514.6 L805 454.6 M873 432.6 L821.1 449.3 M478 473 C491.7 467.8 522.9 454.5 560 441.6 C597.1 428.7 653.4 409.8 700.6 395.6 C747.8 381.4 819.4 363.1 843.1 356.6 M327.8 243.5 L330.7 241.7 L340.5 238.4 L577.4 281.1 L900 336.4 M327.8 243.7 L900 354.5 M478 473 L569 486.5 L596 475.4 M596 475.4 C607.2 471.2 640.5 458.2 663.1 450 C685.8 441.8 697 436.5 731.9 426 C766.8 415.5 844.5 394.6 872.5 386.9 C900.5 379.2 895.4 381 900 379.8 M-1 474.2 L24.8 492.9 L24 502.7 L21.5 506.6 L17 509.5 M17 509.5 C16.7 511.3 14.3 521.9 14.1 527.5 C13.9 533.1 14.9 561.4 15 565.2 M15 565.2 L-1 553.3 M45.3 485.9 C48.8 485.6 59.8 483.5 66.4 483.9 C73 484.4 81.9 487.7 85 488.4 M85 488.4 C85.9 490 91.8 498.8 94.3 504.1 C96.9 509.3 108.8 537.5 110.4 541.2 M110.4 541.2 C113.6 537.7 131.1 520.5 134.8 514.8 C138.4 509.1 136.1 501.5 137.7 498.2 C139.3 494.9 145.7 490.9 146.9 489.8 M146.9 489.8 C146.7 492.5 147.7 504.1 145.5 509.9 C143.3 515.7 137.5 525.4 130.5 533.4 C123.4 541.4 101 564.3 92.8 569.9 C84.6 575.4 72.1 574.3 68.9 575 M68.9 575 L33.6 575 M33.6 575 C33.9 573.7 34.1 569.1 35.5 567.5 C36.9 566 40.9 565.9 42 565.6 M42 565.6 L75.6 565.6 L51.4 509.9 M51.4 509.9 C52.4 510 55.8 509.6 57.6 510.3 C59.5 511 61.7 513.6 62.5 514.2 M62.5 514.2 L83.6 564 M83.6 564 C85 562.9 99.4 552.2 101 550.9 C102.6 549.7 102.8 549.1 102.9 549 M102.9 549 C102.2 546.1 100.3 533.9 97.7 527.5 C95 521.1 85 504.6 83 501.1 M83 501.1 L79.7 495.3 L54.3 494.7 M54.3 494.7 C53.2 494.1 49.3 492.8 47.9 491.4 C46.4 489.9 45.7 486.8 45.3 485.9 M76.8 463.4 C78.5 463.4 86.4 462.7 89.5 463.4 C92.5 464.2 97.7 467.4 99.6 469.3 C101.6 471.2 103.5 476.6 104.1 477.7 M104.1 477.7 L108.4 498.8 L117.6 497.6 M117.6 497.6 C119.6 494.8 129.5 480.4 132.4 476.3 C135.3 472.3 138.3 468.5 139.3 467.3 M162.5 465 C162.5 467.9 162.9 482.4 162.5 490 C162.1 497.6 160.9 524.3 159.2 530.4 C157.5 536.6 152.8 537.9 147.9 542.7 C142.9 547.6 122.1 566.5 116.6 571.8 C111.1 577.1 102 585.5 100.6 588 C99.2 590.6 102.3 595 104.9 593.9 C107.5 592.8 118.9 582.1 122.7 578.9 C126.4 575.7 131.7 571.3 136.7 566.6 C141.7 561.8 161.5 547.2 165.6 538.2 C169.7 529.3 171.1 498.5 171.9 490 C172.6 481.5 172.2 467.9 172.3 465 M1.6 614.5 C4.7 612.9 18.2 605.2 25.4 603.1 C32.6 601 51.3 599.4 55.3 598.8 M55.3 598.8 L57.6 603.7 M57.6 603.7 C53.7 604.7 34.5 608.4 28.3 610.9 C22.1 613.5 13.4 621.3 11.1 622.9 M11.1 622.9 L1.6 614.5 L-1 615.4 M33.6 621.3 C35.4 620.5 42.2 615.4 48.8 614.5 C55.4 613.5 85.4 613.2 90.2 613.1 M90.2 613.1 L102.5 622.9 L93.2 622.9 M93.2 622.9 C89.9 622.7 73.6 621.4 68.4 621.9 C63.1 622.3 57.7 623.9 53.7 626.2 C49.7 628.5 40.5 637.5 38.5 639.3 M38.5 639.3 C36.9 638.1 30.1 635 29.3 632 C28.5 629 32.9 623.1 33.6 621.3 M58.6 644.3 C62.7 642.9 77.3 635.7 85.9 635 C94.6 634.2 110.4 639.1 116.2 639.3 C122.1 639.4 123.5 637.7 125 635.9 C126.5 634.2 123.6 630.1 126 627.5 C128.3 625 136.2 619.1 140.6 618.8 C145 618.4 152.3 622.9 155.3 625.2 C158.2 627.5 159.4 632.7 160.2 634 M160.2 634 L157.8 636.5 L154.9 637.9 M154.9 637.9 C152.8 638.8 144.2 642 141 643.8 C137.8 645.5 134.6 647.6 133.4 649.6 C132.2 651.7 131.4 655.6 132.8 657.4 C134.2 659.3 139.5 662.2 143 661.9 C146.5 661.6 151.8 658 156.2 655.5 C160.7 652.9 168.4 643 172.9 644.7 C177.3 646.5 183.6 662.6 185.9 667.2 C188.3 671.7 188.1 673.8 188.5 675 M58.6 644.3 C57.6 645.1 52.8 646.8 52.7 649.2 C52.6 651.6 57.1 657.2 58 658.8 M58 658.8 C60.6 657.4 69.2 650.4 75.2 649.2 C81.1 648 90.2 649.4 97.7 650.6 C105.1 651.8 118 654.3 125 657.4 C132 660.5 141.6 669 144.5 671.1 M84 669.1 C86.6 668.7 94.4 666.2 99.6 666.2 C104.8 666.2 112.6 668.7 115.2 669.1 M221.5 463 L222.1 471.8 L224.4 474.2 L229.9 479.1 L232.6 477.7 L236.1 473.2 L233.6 467.9 L233.2 463 M258.6 471.4 C256.5 473.6 249 480.4 245.9 484.5 C242.8 488.7 241 494.3 240 496.2 M240 496.2 L241 556.8 L241.6 557.2 L244.5 556.8 L245.9 556.8 L248.8 551.9 L247.9 502.1 M247.9 502.1 C256.8 501.9 300.8 500.7 315.2 500.7 C329.7 500.8 344.9 501.7 356.2 502.5 C367.6 503.3 386.7 504.8 400 507 C413.3 509.2 446 516.7 455.7 518.7 C465.4 520.7 470.4 521.8 472.7 522.2 M258.6 471.4 L260 480.6 L253.1 488.8 L258 488.4 M258 488.4 C265.9 488.2 298.3 485.8 317.2 486.9 C336.1 487.9 386.7 494.5 400 496.2 C413.3 498 409.4 497.8 416.6 499.8 C423.8 501.7 446.3 508.6 453.9 510.9 C461.5 513.2 471.2 516.5 473.8 517.3 M473.8 517.3 L472.7 522.2 M332.8 511.9 C333.3 511 334.8 511 336.7 510.9 C338.6 510.8 349.8 511 352 511.3 C354.1 511.6 358 512.9 358.2 514.2 C358.4 515.5 355.6 523.1 353.7 524 C351.8 524.9 341.5 523.4 339.3 523 C337 522.6 332.1 520.8 331.4 519.7 C330.8 518.6 332.3 512.8 332.8 511.9Z M251.4 616.4 C245.5 616.6 215.3 617.3 207.4 617.8 C199.5 618.3 194.8 619.2 192.2 620.3 C189.5 621.4 187.5 624.5 187.5 626.2 C187.5 627.9 190.1 631.9 192.2 633 C194.3 634.1 197.3 635.4 203.5 634.4 C209.8 633.3 231.7 625.5 239.1 625.2 C246.4 624.9 254.5 629.3 258.6 632 C262.7 634.8 268.4 643.9 269.9 645.7 M251.4 616.4 C252.2 615.6 255.5 613.8 256.6 611.5 C257.7 609.2 257.8 604.2 258 602.7 M258 602.7 L278.1 618.8 M278.1 618.8 C276.2 620.3 266.6 624.4 266.4 628.1 C266.2 631.9 275 639 276.8 641.2 M276.8 641.2 C278 639 279.7 629.7 284 628.1 C288.3 626.6 298 629.8 302.5 632 C307 634.3 309.5 640.2 310.9 641.8 M310.9 641.8 L286.5 660.9 L293.2 668.2 M293.2 668.2 C295.9 666.7 305.4 661.6 309.4 659.4 C313.3 657.2 315.6 655.6 316.8 654.9 M316.8 654.9 L325 660 L331.8 670.1 M269.9 645.7 C267.1 645 257 641.7 250.8 640.8 C244.6 639.9 234.3 639.4 228.7 639.8 C223.1 640.3 216.3 641.4 213.7 643.8 C211 646.1 210.2 652 211.1 655.5 C212.1 659 218.8 665.4 220.1 667.2 M220.1 667.2 C223.8 665.7 235.6 657.7 244.9 657.4 C254.2 657.2 274.4 663.3 282 665.6 C289.6 668 293.7 671.9 295.7 673 M308.4 596.9 C315.6 598.8 345 604.6 356.2 609.6 C367.5 614.6 376.6 624.1 383.6 630.1 C390.6 636.1 400.2 646.7 403.1 649.6 M308.4 596.9 L306.4 598.8 M306.4 603.7 L308 605.7 M307.4 605.3 C313.3 606.5 337.1 609.8 346.5 613.5 C355.9 617.2 365.9 623.8 370.3 630.1 C374.7 636.4 374.8 649.3 375.8 655.5 C376.8 661.6 376.8 668.8 377 671.1 M384.6 671.1 L381.6 644.7 L391 646.1 L398.2 656.4 L407 671.1 M384.4 516.2 L421.9 522.2 L425 546.1 L419.5 551.9 L402 549.4 L388.3 547.4 M388.3 547.4 L382 527.9 L377.3 516.2 M377.3 516.2 L386.3 517.1 M387.5 558.4 L392 558.8 L399 560.3 L429.3 568.5 L430.9 580.8 M387.5 558.4 L391 561.7 L393.4 567 L398 588 M493.4 521.6 L497.3 534.3 M493.4 521.6 C499.1 521.4 539.7 519.3 550.4 519.1 C561.1 518.9 590.8 519.2 600 519.5 C609.2 519.8 638.3 522 642.6 522.2 M497.3 534.3 C504.6 534.1 558.6 532 570.3 531.8 C582.1 531.6 606.4 531.7 614.8 532 C623.2 532.2 650.4 534.1 654.3 534.3 M642.6 522.2 C643.7 522.8 647.5 524.4 649 525.5 C650.6 526.7 651.5 528.3 652 528.9 M652 528.9 L654.3 534.3 M522.7 559.3 C522.6 557.9 521.5 553.4 522.5 550.9 C523.4 548.5 525.8 546.1 528.5 544.7 C531.2 543.3 535.3 542.5 538.7 542.5 C542.1 542.5 546.1 543.3 548.8 544.7 C551.5 546.1 554.6 548.5 554.9 550.9 C555.1 553.4 551.1 557.9 550.4 559.3 M569 559.3 C568.5 557.8 564.7 553.7 566.2 550.9 C567.6 548.2 573.1 544.1 577.1 544.1 C581.1 544.1 586.6 548.2 588 550.9 C589.5 553.7 585.7 557.8 585.2 559.3 M602 559.3 C601.5 557.8 597.7 553.7 599.2 550.9 C600.7 548.2 606 544.1 610 544.1 C614 544.1 619.3 548.2 620.8 550.9 C622.3 553.7 618.5 557.8 618 559.3 M637.6 559.3 C637 558 632.9 554.6 634.5 552.2 C636.1 549.8 642 546.4 646.4 546.4 C650.8 546.4 656.7 549.8 658.3 552.2 C659.9 554.6 655.8 558 655.2 559.3 M516.8 568 L519.1 562 L522.7 559.3 L527 559.3 M550.4 559.3 L569 559.3 M585.2 559.3 L602 559.3 M618 559.3 L637.6 559.3 M653.3 559.3 L655.2 559.3 L659.5 564.6 L658.7 568 L526 568 M527 585.3 L516 669 M534 586.3 L525 669 M527 585.3 C527.5 585 528.8 583.4 530 583.6 C531.2 583.8 533.3 585.8 534 586.3 M528.9 583.9 M535.3 587.8 M546.8 585.3 L535.8 669 M553.8 586.3 L544.8 669 M546.8 585.3 C547.3 585 548.6 583.4 549.8 583.6 C551 583.8 553.1 585.8 553.8 586.3 M548.7 583.9 M555.1 587.8 M567.2 585.3 L556.2 669 M574.2 586.3 L565.2 669 M567.2 585.3 C567.7 585 569 583.4 570.2 583.6 C571.4 583.8 573.5 585.8 574.2 586.3 M569.1 583.9 M575.5 587.8 M586.8 585.3 L575.8 669 M593.8 586.3 L584.8 669 M586.8 585.3 C587.3 585 588.6 583.4 589.8 583.6 C591 583.8 593.1 585.8 593.8 586.3 M588.7 583.9 M595.1 587.8 M606.6 585.3 L595.6 669 M613.6 586.3 L604.6 669 M606.6 585.3 C607.1 585 608.4 583.4 609.6 583.6 C610.8 583.8 612.9 585.8 613.6 586.3 M608.5 583.9 M614.9 587.8 M626.6 585.3 L615.6 669 M633.6 586.3 L624.6 669 M626.6 585.3 C627.1 585 628.4 583.4 629.6 583.6 C630.8 583.8 632.9 585.8 633.6 586.3 M628.5 583.9 M634.9 587.8 M646.6 585.3 L635.6 669 M653.6 586.3 L644.6 669 M646.6 585.3 C647.1 585 648.4 583.4 649.6 583.6 C650.8 583.8 652.9 585.8 653.6 586.3 M648.5 583.9 M654.9 587.8 M467.6 552.5 C466.2 556 455.5 581.4 454.3 587.1 C453.1 592.8 454.7 601.2 455.7 609.6 C456.6 618 463 664.9 463.9 671.1 M470.5 552.3 C471.1 553.8 476.1 560.8 475.8 565 C475.4 569.3 468.1 582 467.4 589.1 C466.7 596.1 468.9 616 469.9 625.6 C471 635.2 475.8 665.8 476.6 671.1 M467.6 552.5 L470.5 552.3 M429.3 568.6 L430.7 580.9 L429.3 598.8 L401 589.1 L399 588.5 M403.9 605.1 L407.8 603.3 L430.7 610.5 M430.7 610.5 C431.2 610.9 435.5 613.5 436.1 614.5 C436.8 615.4 437 619.2 437.1 619.7 M437.1 619.7 L438.1 650.2 L432.6 652.5 L417.6 645.7 L413.3 639.3 L412.3 631.4 L403.9 605.1 M399 644.7 L404.9 651.6 L414.6 671.1 M399 658.4 L405.9 671.1 M651.9 515.2 L661.4 521.1 M661.4 521.1 C662.1 522.3 666.2 528.4 666.9 531.4 C667.7 534.4 668 542.3 667.9 547 C667.8 551.7 666.3 565.5 665.9 571.8 C665.5 578.2 664.8 593.8 664.4 601.7 C664 609.6 662.8 635 662.6 639.4 M662.6 639.4 L677.7 642.1 L679.6 670.1 M804.9 454.4 C805.7 456.7 808.2 467.7 810.9 471.3 C813.6 475 823.1 480.4 825 481.8 M803.5 481.1 L815.1 481.4 L825 481.8 M815.1 455.7 C817.6 456.2 825.9 456.6 829.7 458.8 C833.5 461 836.5 467 837.8 468.7 M815.1 455.7 C816 458 816.5 465.9 820.3 469.8 C824.1 473.6 834.9 477.2 837.8 478.7 M837.8 468.7 L837.8 478.7 M821.5 449.4 C823.7 450.1 830.7 451.6 834.4 453.3 C838.1 455 842.2 458.5 843.8 459.6 M843.8 461.9 L843.8 459.6 L843.8 450.2 L852.1 454.1 M852.1 454.1 C854.1 455 860.5 457.4 864.2 459.6 C867.9 461.8 872.7 466.1 874.4 467.4 M852.9 464 C855 465.2 862.7 467.8 865.7 471.3 C868.8 474.9 870.5 481.3 871.2 485.4 C872 489.5 870.3 494.2 870.1 495.9 M852.9 464 C853.5 467 853.5 477 856.3 482.3 C859.2 487.6 867.8 493.7 870.1 495.9 M803.5 481.1 L810.6 490.1 L815.6 496.7 L826.1 510 L836 519.9 L837.8 519.9 M821.5 490.1 C824.5 490.9 833.4 490.9 839.1 494.8 C844.8 498.8 852.8 510.5 855.6 513.7 M822.6 491.2 C824 493 830.2 501.9 832.8 504.7 C835.4 507.5 839.2 510.9 842.2 512.1 C845.3 513.3 853.8 513.4 855.6 513.7 M837.8 519.9 L833.9 520.7 L824.7 525.1 L832.5 530.9 L840.7 536.8 L854 546.1 L866.5 555.2 M842.7 527 C845.2 526.7 852.6 524.6 857.9 525.4 C863.2 526.2 871.6 530.6 874.4 531.7 M842.7 527 L846.2 529.8 L862.6 542.2 L875.1 548.1 M841.9 546 L854 546.5 M841.9 546 C843 547.3 847.2 552.5 849.8 555.5 C852.3 558.6 857.8 566.1 861 569.2 C864.3 572.3 872.6 577.6 874.4 578.9 M874.4 555.1 L861 555.4 L874.4 568.9 M871.7 586.9 M735.3 647.2 L747 645.7 L755.6 644.1 L773.2 641.8 L780 642.7 L786.4 640.8 M786.4 640.8 C789.5 640.3 799.2 637.5 805 637.9 C810.8 638.2 818.3 642.2 821 643.1 M821 643.1 L825.5 647 L834.7 648 M834.7 648 C837.9 648.8 854.6 652.4 859.1 654.1 C863.6 655.8 865.9 659.2 868.1 660.7 C870.2 662.2 874.3 664.6 875.3 665.2 M735.3 647.2 C736.4 648.3 739.8 652 743.9 655 C748 658.1 763 668.1 765.9 670.1 M754.2 652.9 L757.1 652.5 L773.2 650.2 M773.2 650.2 C774.9 650.9 780.9 652.3 783.5 654.5 C786.2 656.6 788.1 661.8 789 663.2 M754.2 652.9 C756.5 654.5 762.1 660.4 767.9 662.3 C773.7 664.2 785.5 663.9 789 664.2 M794.6 647.2 C798.3 647.7 811.2 647.3 816.3 650.2 C821.5 653 824 661.9 825.5 664.2 M794.6 647.2 L801.1 652.5 M801.1 652.5 C803 653.8 808.7 658.4 812.8 660.3 C816.9 662.3 823.4 663.6 825.5 664.2 M838.2 657 C841.1 657.5 851.2 658.1 855.8 660.3 C860.3 662.5 863.9 668.5 865.5 670.1 M838.2 657 C838.9 658.2 840.8 662 842.1 664.2 C843.4 666.4 845.4 669.1 846 670.1 M699.5 668.1 M653.1 259.1 L650 251.6 L678.9 254.4 L707.8 257.8 L713.3 259.1 L712.8 260.6 L706.6 266.6 L702.3 267.7 L680.8 264.5 L656.2 261.1 L653.1 259.1 M649.2 250.9 M621.4 260.6 C620.9 261.1 619.1 262.4 618.4 263.8 C617.8 265.1 617.8 267.7 617.7 268.4 M617.7 268.4 L617.7 272.3 L618.3 273.9 M618.3 273.9 C618.4 274.2 618.5 275.4 619.1 275.9 C619.6 276.5 621 277.1 621.4 277.3 M621.4 260.6 L641.9 263.8 L699.7 271.9 L711.7 273.4 L712.2 274.7 L701.6 287.2 L696.4 289.1 L621.4 277.3 M710.9 274.1 M756.2 274.7 L761.7 265.3 L768 266.4 M768 266.4 C769.6 267.1 774.9 269.5 777.8 270.8 C780.8 272.1 784.3 273.8 785.6 274.4 M785.6 274.4 L789.5 270.8 L790.6 269.2 M789.5 270 L843 275.9 L873.9 280.5 M756.2 274.7 L782.5 279.4 L785.6 274.4 M789.5 270.8 L794.5 277.5 L798.9 280.6 L810.9 282 L848.1 287.2 L866.4 289.8 L873.9 290.8 M764.2 284.4 L873.9 297.7 M764.2 284.4 L763.3 298.1 L873.9 318.1"/>
<path fill="#4470d8" d="M0.9 95.2h4v4h-4zM8.3 92.9h4v4h-4zM12.1 90.6h4v4h-4zM15 89.1h4v4h-4zM21.4 85.6h4v4h-4zM26.4 81.2h4v4h-4zM30.8 78.3h4v4h-4zM23.8 102.9h4v4h-4zM76.5 108.7h4v4h-4zM134.8 107.8h4v4h-4zM154.7 113.1h4v4h-4zM155.6 120.1h4v4h-4zM151.8 123.7h4v4h-4zM95.6 126h4v4h-4zM50.7 128.6h4v4h-4zM42.8 151.2h4v4h-4zM42.8 170.5h4v4h-4zM41.1 174.9h4v4h-4zM39 180.8h4v4h-4zM41.9 183.7h4v4h-4zM41.9 190.5h4v4h-4zM44.3 211h4v4h-4zM37 181.7h4v4h-4zM41.1 180.2h4v4h-4zM0.9 200.4h4v4h-4zM5.3 201.3h4v4h-4zM10.3 202.8h4v4h-4zM14.1 204.2h4v4h-4zM17.9 205.1h4v4h-4zM22 206.3h4v4h-4zM25.8 208.6h4v4h-4zM29.6 209.5h4v4h-4zM34.6 210.1h4v4h-4zM44.9 212.1h4v4h-4zM52.8 214.5h4v4h-4zM52.8 191.9h4v4h-4zM61.6 181.1h4v4h-4zM64.8 187.5h4v4h-4zM73.6 205.7h4v4h-4zM75.6 211.6h4v4h-4zM76.5 215.9h4v4h-4zM58.1 214.5h4v4h-4zM65.4 216.8h4v4h-4zM76.5 191.9h4v4h-4zM80.6 175.2h4v4h-4zM98.5 175.8h4v4h-4zM115.2 176.1h4v4h-4zM109.3 202.8h4v4h-4zM107.9 207.2h4v4h-4zM106.4 211.6h4v4h-4zM102 213.9h4v4h-4zM97.6 215.9h4v4h-4zM91.8 215.4h4v4h-4zM88.8 213.6h4v4h-4zM85.9 211.6h4v4h-4zM115.2 212.1h4v4h-4zM124.9 184.6h4v4h-4zM134.8 209.5h4v4h-4zM134.8 216.8h4v4h-4zM116.1 216.8h4v4h-4zM162.1 150.6h4v4h-4zM134.8 172.3h4v4h-4zM144.5 214.5h4v4h-4zM147.4 215.9h4v4h-4zM159.1 216.5h4v4h-4zM167.3 211.6h4v4h-4zM173.8 211.6h4v4h-4zM176.1 211.6h4v4h-4zM181.1 212.4h4v4h-4zM187 211.6h4v4h-4zM189.9 212.1h4v4h-4zM194.3 212.4h4v4h-4zM199.6 212.4h4v4h-4zM204.5 214.5h4v4h-4zM212.7 211h4v4h-4zM216.3 213h4v4h-4zM218.3 213.6h4v4h-4zM222.1 211.6h4v4h-4zM226.5 212.1h4v4h-4zM232.4 213h4v4h-4zM235.3 213.6h4v4h-4zM238.2 213.6h4v4h-4zM244.1 213.6h4v4h-4zM249.4 213.3h4v4h-4zM168.8 152.4h4v4h-4zM180.5 153h4v4h-4zM184.6 152.1h4v4h-4zM187.8 144.8h4v4h-4zM184.9 140.7h4v4h-4zM182 135.4h4v4h-4zM177.3 122.2h4v4h-4zM167.9 118.4h4v4h-4zM165.9 114.3h4v4h-4zM175.2 112.5h4v4h-4zM191.7 110.8h4v4h-4zM251.7 112.8h4v4h-4zM298 126h4v4h-4zM256.7 153.5h4v4h-4zM254.3 157.4h4v4h-4zM247.9 213.3h4v4h-4zM371.8 73.9h4v4h-4zM384.9 80.9h4v4h-4zM417.7 83.2h4v4h-4zM434.7 95.8h4v4h-4zM422.1 113.1h4v4h-4zM368.8 116.3h4v4h-4zM338.9 117.2h4v4h-4zM321.4 126.3h4v4h-4zM330.1 130.1h4v4h-4zM335.4 131.6h4v4h-4zM630.7 74.4h4v4h-4zM628.4 76.8h4v4h-4zM624.9 79.1h4v4h-4zM621.4 81.8h4v4h-4zM619 82.6h4v4h-4zM610.2 82.6h4v4h-4zM586.2 84.7h4v4h-4zM557.8 85.6h4v4h-4zM551.3 83.5h4v4h-4zM535.8 79.7h4v4h-4zM520.6 80.9h4v4h-4zM510.3 87.9h4v4h-4zM509.4 95.2h4v4h-4zM510.9 106.1h4v4h-4zM511.5 122.2h4v4h-4zM509.4 125.1h4v4h-4zM508.9 131.9h4v4h-4zM507.1 139.2h4v4h-4zM306.7 161.5h4v4h-4zM299.8 169.8h4v4h-4zM289.1 170.8h4v4h-4zM280.8 163.9h4v4h-4zM279.8 153.2h4v4h-4zM286.7 144.9h4v4h-4zM297.4 143.9h4v4h-4zM305.7 150.8h4v4h-4zM287.1 193.8h4v4h-4zM281.2 202.5h4v4h-4zM270.9 204.5h4v4h-4zM262.1 198.7h4v4h-4zM260.1 188.3h4v4h-4zM266 179.6h4v4h-4zM276.3 177.6h4v4h-4zM285.1 183.4h4v4h-4zM303.8 228.7h4v4h-4zM293.7 235.9h4v4h-4zM281.7 232.6h4v4h-4zM276.8 221.1h4v4h-4zM282.8 210.1h4v4h-4zM295.1 208h4v4h-4zM304.4 216.3h4v4h-4zM311.7 175.8h4v4h-4zM300 180.2h4v4h-4zM297 194.9h4v4h-4zM311.7 202.2h4v4h-4zM307.3 182.3h4v4h-4zM305.8 193.4h4v4h-4zM343.7 162.7h4v4h-4zM334 170.4h4v4h-4zM322 167.7h4v4h-4zM316.6 156.5h4v4h-4zM322 145.4h4v4h-4zM334.1 142.6h4v4h-4zM343.7 150.3h4v4h-4zM347.3 142.6h4v4h-4zM382.5 144.2h4v4h-4zM381.9 160.2h4v4h-4zM362.5 158.9h4v4h-4zM376.6 160.2h4v4h-4zM358.6 162.6h4v4h-4zM353.7 166.7h4v4h-4zM358.6 172.5h4v4h-4zM367.4 163.2h4v4h-4zM376.6 163.7h4v4h-4zM381.5 166.1h4v4h-4zM382.5 169h4v4h-4zM364.9 172.9h4v4h-4zM377.2 173.9h4v4h-4zM358.4 178.8h4v4h-4zM363.9 179.2h4v4h-4zM380.9 180.1h4v4h-4zM358 187.2h4v4h-4zM365.5 188.9h4v4h-4zM375.6 190.1h4v4h-4zM377.2 186.6h4v4h-4zM326.8 178.8h4v4h-4zM337.5 175.3h4v4h-4zM340.5 175.3h4v4h-4zM350.2 175.5h4v4h-4zM350.2 178.4h4v4h-4zM348.3 188.2h4v4h-4zM327.2 186.6h4v4h-4zM321.9 185.6h4v4h-4zM395.3 144.6h4v4h-4zM477.4 148.9h4v4h-4zM476.6 167.1h4v4h-4zM399.1 160.6h4v4h-4zM395.7 165.1h4v4h-4zM389.9 168.6h4v4h-4zM391.8 174.3h4v4h-4zM408.4 176.2h4v4h-4zM418.2 176.8h4v4h-4zM417.6 181.7h4v4h-4zM415.1 184.6h4v4h-4zM411.4 190.1h4v4h-4zM403.9 190.5h4v4h-4zM400 189.1h4v4h-4zM394.2 188.5h4v4h-4zM401 165.7h4v4h-4zM403.9 166.1h4v4h-4zM406.9 166.1h4v4h-4zM423.5 167.6h4v4h-4zM426 172.5h4v4h-4zM397.1 179.8h4v4h-4zM396.1 181.7h4v4h-4zM431.9 172.9h4v4h-4zM434.6 168.6h4v4h-4zM438.7 168.6h4v4h-4zM456.7 169.8h4v4h-4zM474.2 171h4v4h-4zM479.1 176.8h4v4h-4zM473.7 181.1h4v4h-4zM440.5 178.8h4v4h-4zM454.1 179.8h4v4h-4zM420 192.8h4v4h-4zM430.9 183.3h4v4h-4zM437.7 184.6h4v4h-4zM440.7 191.5h4v4h-4zM439.5 194.8h4v4h-4zM448.9 186h4v4h-4zM463.5 196.8h4v4h-4zM467.4 197.3h4v4h-4zM474.2 191.5h4v4h-4zM473.3 186.6h4v4h-4zM489.9 149.5h4v4h-4zM496.7 168h4v4h-4zM491.8 172.9h4v4h-4zM486.9 175.9h4v4h-4zM488.9 181.1h4v4h-4zM504.5 184.2h4v4h-4zM513.3 184.6h4v4h-4zM504.1 173.5h4v4h-4zM493.8 188.9h4v4h-4zM507.8 190.1h4v4h-4zM508.4 197.3h4v4h-4zM493.8 202.2h4v4h-4zM490.9 192.1h4v4h-4zM486 197.3h4v4h-4zM473.3 202.2h4v4h-4zM470.9 218.8h4v4h-4zM485 227.6h4v4h-4zM482.1 204.8h4v4h-4zM479.1 217.5h4v4h-4zM381.9 193.8h4v4h-4zM378.9 210h4v4h-4zM393.2 218.8h4v4h-4zM389.9 196h4v4h-4zM387.3 208.7h4v4h-4zM318 204.8h4v4h-4zM320.3 205.1h4v4h-4zM339.5 207.7h4v4h-4zM343.4 212h4v4h-4zM341 217.8h4v4h-4zM322.9 226.6h4v4h-4zM318 221.8h4v4h-4zM350.2 230.5h4v4h-4zM370.7 221.8h4v4h-4zM380.5 223.7h4v4h-4zM381.5 225.7h4v4h-4zM384.4 236.4h4v4h-4zM381.5 238.9h4v4h-4zM359 235h4v4h-4zM349.2 234.4h4v4h-4zM406.3 213h4v4h-4zM411.8 213.9h4v4h-4zM426.4 221.8h4v4h-4zM423.5 226.2h4v4h-4zM401 224.7h4v4h-4zM401 220.8h4v4h-4zM401.6 227.6h4v4h-4zM397.5 230.1h4v4h-4zM396.1 238h4v4h-4zM399.1 241.3h4v4h-4zM430.9 246.6h4v4h-4zM434.6 245.8h4v4h-4zM445 234.4h4v4h-4zM428 231.5h4v4h-4zM412.3 229.2h4v4h-4zM431.9 217.5h4v4h-4zM434.2 214.5h4v4h-4zM450.8 217.5h4v4h-4zM456.7 218.4h4v4h-4zM460.6 219.8h4v4h-4zM460.6 221.8h4v4h-4zM452.8 227.6h4v4h-4zM450.4 228.6h4v4h-4zM441.4 227.6h4v4h-4zM438.7 225.1h4v4h-4zM444.6 248.1h4v4h-4zM445.9 245.8h4v4h-4zM464.1 237.8h4v4h-4zM475.8 241.7h4v4h-4zM481.7 250.7h4v4h-4zM480.1 254h4v4h-4zM496.7 226.6h4v4h-4zM507.1 229h4v4h-4zM517.2 231.5h4v4h-4zM492.8 232.5h4v4h-4zM492.8 235.8h4v4h-4zM514.9 238.7h4v4h-4zM498.7 241.3h4v4h-4zM494.8 244.6h4v4h-4zM493.8 253h4v4h-4zM496.1 256.5h4v4h-4zM507.8 257.5h4v4h-4zM506.8 139.7h4v4h-4zM539.6 140.7h4v4h-4zM589.2 142.6h4v4h-4zM589.2 135.8h4v4h-4zM584.9 134.8h4v4h-4zM571.8 135.2h4v4h-4zM558 134.8h4v4h-4zM546.4 130.9h4v4h-4zM539.6 136.8h4v4h-4zM598.8 155.3h4v4h-4zM596 175.9h4v4h-4zM615.6 154.8h4v4h-4zM618.7 175.9h4v4h-4zM609.9 144.2h4v4h-4zM522 175.5h4v4h-4zM524 179.8h4v4h-4zM526.7 184.6h4v4h-4zM527.3 190.5h4v4h-4zM522 192.1h4v4h-4zM516.9 197.3h4v4h-4zM516.9 199.9h4v4h-4zM547.4 202.6h4v4h-4zM549.8 197.7h4v4h-4zM544.9 192.5h4v4h-4zM541 191.5h4v4h-4zM536.5 176.2h4v4h-4zM570.3 179.2h4v4h-4zM577.7 179.8h4v4h-4zM590.4 180.7h4v4h-4zM593.3 186.6h4v4h-4zM587.5 190.9h4v4h-4zM565 189.1h4v4h-4zM513.2 184.6h4v4h-4zM507.8 190.5h4v4h-4zM508.2 197.3h4v4h-4zM559.9 192.8h4v4h-4zM557.2 195.4h4v4h-4zM557.6 197.3h4v4h-4zM578.7 194.8h4v4h-4zM581 200.9h4v4h-4zM572.8 206.7h4v4h-4zM591.4 208.1h4v4h-4zM578.7 213.5h4v4h-4zM576.1 229.6h4v4h-4zM590.4 238.7h4v4h-4zM587.5 215.9h4v4h-4zM584.9 228.6h4v4h-4zM608.9 182.1h4v4h-4zM603.1 186.6h4v4h-4zM608.9 192.5h4v4h-4zM609.9 196.4h4v4h-4zM608 202.6h4v4h-4zM612.8 207.5h4v4h-4zM622 205.1h4v4h-4zM628.9 199.9h4v4h-4zM626.9 198.3h4v4h-4zM626.3 183.3h4v4h-4zM643.5 184.6h4v4h-4zM645.5 189.5h4v4h-4zM634.7 194.8h4v4h-4zM630.4 194.4h4v4h-4zM658.2 185.6h4v4h-4zM655.2 186.2h4v4h-4zM650 194.8h4v4h-4zM690 188.2h4v4h-4zM632.4 212h4v4h-4zM631.8 208.7h4v4h-4zM641.2 201.8h4v4h-4zM644.9 200.7h4v4h-4zM684.5 203.8h4v4h-4zM687.8 204.8h4v4h-4zM698 216.9h4v4h-4zM516.9 232.1h4v4h-4zM517.5 234.4h4v4h-4zM528.3 233.5h4v4h-4zM552.7 235.8h4v4h-4zM562.5 236.8h4v4h-4zM565 238.7h4v4h-4zM560.5 244.6h4v4h-4zM556 245.8h4v4h-4zM533.2 241.3h4v4h-4zM529.2 235h4v4h-4zM535.1 243.2h4v4h-4zM527.3 246.2h4v4h-4zM534.5 248.7h4v4h-4zM541.6 249.5h4v4h-4zM558.5 250.7h4v4h-4zM562.1 252h4v4h-4zM554.6 259.8h4v4h-4zM544.5 263.9h4v4h-4zM607.4 250.7h4v4h-4zM613.8 242.8h4v4h-4zM620.7 244.6h4v4h-4zM631.4 249.7h4v4h-4zM630.2 255.3h4v4h-4zM564.9 265.6h4v4h-4zM581.4 255.5h4v4h-4zM587.5 254h4v4h-4zM596 255.3h4v4h-4zM599.2 257.9h4v4h-4zM600.9 269.4h4v4h-4zM796.6 152.4h4v4h-4zM751.8 162.2h4v4h-4zM748.9 186h4v4h-4zM852.8 167.1h4v4h-4zM768.2 162.8h4v4h-4zM770.8 187.6h4v4h-4zM709.2 189.9h4v4h-4zM738 191.5h4v4h-4zM742.5 194.4h4v4h-4zM743 197.3h4v4h-4zM740.1 201.2h4v4h-4zM684.8 203.8h4v4h-4zM699.1 216.9h4v4h-4zM699.1 218.4h4v4h-4zM709.2 206.1h4v4h-4zM710.2 208.1h4v4h-4zM716.7 206.5h4v4h-4zM734.6 208.1h4v4h-4zM736.6 209.6h4v4h-4zM736 213.5h4v4h-4zM728.4 218.4h4v4h-4zM725.9 218.2h4v4h-4zM755.1 193.4h4v4h-4zM751.2 195.4h4v4h-4zM751.2 199.9h4v4h-4zM754.8 202.8h4v4h-4zM768.2 203.6h4v4h-4zM780.9 204.8h4v4h-4zM789.7 200.9h4v4h-4zM789.3 196.4h4v4h-4zM767.5 194.4h4v4h-4zM756.1 209.6h4v4h-4zM754.2 213h4v4h-4zM754.8 216.9h4v4h-4zM760.4 221.4h4v4h-4zM765.9 221.8h4v4h-4zM772.3 217.5h4v4h-4zM772.3 212h4v4h-4zM771.4 211h4v4h-4zM746.4 220.8h4v4h-4zM733.1 226.2h4v4h-4zM727.8 247.7h4v4h-4zM740.5 260h4v4h-4zM740.9 230.1h4v4h-4zM737 246.8h4v4h-4zM794.6 205.5h4v4h-4zM819 198.3h4v4h-4zM867.5 201.8h4v4h-4zM778 225.7h4v4h-4zM779 224.3h4v4h-4zM788.7 214.5h4v4h-4zM792.8 213h4v4h-4zM825.9 215.9h4v4h-4zM779 225.1h4v4h-4zM609.6 144.2h4v4h-4zM611.7 138.3h4v4h-4zM619 132.5h4v4h-4zM623.4 126.6h4v4h-4zM626.3 117.8h4v4h-4zM627.2 114.9h4v4h-4zM629.3 111.9h4v4h-4zM635.1 107h4v4h-4zM643 107h4v4h-4zM652.7 106.7h4v4h-4zM656.5 104.6h4v4h-4zM660 99.6h4v4h-4zM657.7 96.4h4v4h-4zM654.2 92.9h4v4h-4zM649.8 86.5h4v4h-4zM646 79.7h4v4h-4zM643 73.9h4v4h-4zM764.9 73.3h4v4h-4zM774.9 78.8h4v4h-4zM795.7 78.3h4v4h-4zM800.1 81.2h4v4h-4zM800.7 84.1h4v4h-4zM807.4 95h4v4h-4zM817.4 104h4v4h-4zM822.6 109h4v4h-4zM822.6 114h4v4h-4zM797.7 142.7h4v4h-4zM846.7 103.7h4v4h-4zM846.7 112.8h4v4h-4zM143 270.3h4v4h-4zM140.1 278.8h4v4h-4zM121.9 282.1h4v4h-4zM114.6 292.9h4v4h-4zM121.6 295.2h4v4h-4zM123.1 314h4v4h-4zM119 314.9h4v4h-4zM119 321h4v4h-4zM74.8 328.9h4v4h-4zM50.1 322.5h4v4h-4zM45.5 318.4h4v4h-4zM27.3 316.9h4v4h-4zM168.5 273.3h4v4h-4zM257.9 282.1h4v4h-4zM250.5 284.7h4v4h-4zM247 289.4h4v4h-4zM244.1 295.8h4v4h-4zM239.7 298.2h4v4h-4zM241.2 308.4h4v4h-4zM235.9 309h4v4h-4zM237.4 314.9h4v4h-4zM171.7 315.8h4v4h-4zM14.1 346.5h4v4h-4zM12.6 351.5h4v4h-4zM10.3 356.8h4v4h-4zM2.4 361.8h4v4h-4zM2.4 368.5h4v4h-4zM6.2 372h4v4h-4zM10.3 374.9h4v4h-4zM20.9 375.8h4v4h-4zM29.6 379.9h4v4h-4zM27.3 442.3h4v4h-4zM61 344.2h4v4h-4zM124 337.7h4v4h-4zM130.4 344.2h4v4h-4zM124.6 351.5h4v4h-4zM68.9 355.3h4v4h-4zM63.9 358.8h4v4h-4zM53.7 366.1h4v4h-4zM46.3 361.8h4v4h-4zM50.1 353.8h4v4h-4zM56.6 347.7h4v4h-4zM63 396.3h4v4h-4zM66 373.5h4v4h-4zM84.4 371.1h4v4h-4zM120.5 369.7h4v4h-4zM134.8 374.9h4v4h-4zM137.7 429.1h4v4h-4zM132.2 431.5h4v4h-4zM121.9 432.6h4v4h-4zM132.8 447.6h4v4h-4zM137.7 464.9h4v4h-4zM64.5 429.1h4v4h-4zM67.4 434.4h4v4h-4zM69.2 457.8h4v4h-4zM74.8 461.4h4v4h-4zM161.5 330.1h4v4h-4zM171.7 329.5h4v4h-4zM170.9 378.4h4v4h-4zM182 330.1h4v4h-4zM179.6 333.9h4v4h-4zM184.9 342.1h4v4h-4zM199.3 353.8h4v4h-4zM203.1 352.4h4v4h-4zM204 339.2h4v4h-4zM202.2 331h4v4h-4zM200.1 330.1h4v4h-4zM190.8 328.9h4v4h-4zM184.9 384.3h4v4h-4zM201 382.3h4v4h-4zM201 404.8h4v4h-4zM202.2 474.2h4v4h-4zM185.5 425.6h4v4h-4zM186.4 449.6h4v4h-4zM191.9 457h4v4h-4zM195.8 474.2h4v4h-4zM221.2 377.9h4v4h-4zM245.6 374.1h4v4h-4zM251.4 379.9h4v4h-4zM252.9 404.2h4v4h-4zM250.8 407.7h4v4h-4zM237.4 410.1h4v4h-4zM216.3 417.4h4v4h-4zM214.2 418h4v4h-4zM213.9 385.8h4v4h-4zM262.3 371.1h4v4h-4zM262.3 383.7h4v4h-4zM264 412.1h4v4h-4zM271 413.9h4v4h-4zM264.6 427.7h4v4h-4zM293.3 462.8h4v4h-4zM218.3 435.9h4v4h-4zM217.7 438.8h4v4h-4zM218.3 443.8h4v4h-4zM225.9 440.9h4v4h-4zM233.8 444.7h4v4h-4zM233.3 449.6h4v4h-4zM230.3 455.5h4v4h-4zM235.9 457h4v4h-4zM234.7 459.9h4v4h-4zM231.8 466.3h4v4h-4zM281.8 286.2h4v4h-4zM345.4 296.4h4v4h-4zM346 306.1h4v4h-4zM352.1 314.3h4v4h-4zM354.2 321.6h4v4h-4zM347.7 320.7h4v4h-4zM348.9 327.5h4v4h-4zM291.8 321.6h4v4h-4zM291.8 299.3h4v4h-4zM369.7 300.8h4v4h-4zM606.4 362h4v4h-4zM370.9 311.9h4v4h-4zM370.3 315.5h4v4h-4zM365.9 319.3h4v4h-4zM367.4 330.1h4v4h-4zM410.4 336h4v4h-4zM417.2 341.8h4v4h-4zM419.2 388.7h4v4h-4zM412.2 390.5h4v4h-4zM412.2 394h4v4h-4zM406.9 394.9h4v4h-4zM409.8 413.6h4v4h-4zM401.9 408h4v4h-4zM390.2 356.5h4v4h-4zM397.5 357.9h4v4h-4zM401 361.8h4v4h-4zM405.4 360.3h4v4h-4zM404.9 346.2h4v4h-4zM359.2 340.4h4v4h-4zM349.8 345.1h4v4h-4zM345.4 345.6h4v4h-4zM344.8 350.9h4v4h-4zM340.4 352.1h4v4h-4zM340.4 356.5h4v4h-4zM337.5 357.4h4v4h-4zM337.5 361.2h4v4h-4zM332.8 363.2h4v4h-4zM340.4 444.7h4v4h-4zM313.2 361.8h4v4h-4zM318.1 447.6h4v4h-4zM320.5 466.3h4v4h-4zM293.2 462.8h4v4h-4zM598.5 271.5h4v4h-4zM711.3 290h4v4h-4zM712.8 287h4v4h-4zM728.9 276.2h4v4h-4zM734.7 275.3h4v4h-4zM745 276.8h4v4h-4zM748.8 280.3h4v4h-4zM750.3 292.3h4v4h-4zM747.3 295.2h4v4h-4zM840.8 355h4v4h-4zM649.8 512.6h4v4h-4zM803 452.6h4v4h-4zM819.1 447.3h4v4h-4zM476 471h4v4h-4zM841.1 354.6h4v4h-4zM325.8 241.5h4v4h-4zM328.7 239.7h4v4h-4zM338.5 236.4h4v4h-4zM575.4 279.1h4v4h-4zM567 484.5h4v4h-4zM594 473.4h4v4h-4zM22.8 490.9h4v4h-4zM22 500.7h4v4h-4zM19.5 504.6h4v4h-4zM15 507.5h4v4h-4zM13 563.2h4v4h-4zM43.3 483.9h4v4h-4zM83 486.4h4v4h-4zM92.3 502.1h4v4h-4zM108.4 539.2h4v4h-4zM132.8 512.8h4v4h-4zM135.7 496.2h4v4h-4zM144.9 487.8h4v4h-4zM128.5 531.4h4v4h-4zM90.8 567.9h4v4h-4zM66.9 573h4v4h-4zM31.6 573h4v4h-4zM40 563.6h4v4h-4zM73.6 563.6h4v4h-4zM49.4 507.9h4v4h-4zM60.5 512.2h4v4h-4zM81.6 562h4v4h-4zM99 548.9h4v4h-4zM100.9 547h4v4h-4zM81 499.1h4v4h-4zM77.7 493.3h4v4h-4zM52.3 492.7h4v4h-4zM87.5 461.4h4v4h-4zM102.1 475.7h4v4h-4zM106.4 496.8h4v4h-4zM115.6 495.6h4v4h-4zM130.4 474.3h4v4h-4zM137.3 465.3h4v4h-4zM160.5 488h4v4h-4zM157.2 528.4h4v4h-4zM145.9 540.7h4v4h-4zM114.6 569.8h4v4h-4zM102.9 591.9h4v4h-4zM120.7 576.9h4v4h-4zM134.7 564.6h4v4h-4zM163.6 536.2h4v4h-4zM169.9 488h4v4h-4zM-0.4 612.5h4v4h-4zM23.4 601.1h4v4h-4zM53.3 596.8h4v4h-4zM55.6 601.7h4v4h-4zM26.3 608.9h4v4h-4zM9.1 620.9h4v4h-4zM31.6 619.3h4v4h-4zM88.2 611.1h4v4h-4zM100.5 620.9h4v4h-4zM91.2 620.9h4v4h-4zM66.4 619.9h4v4h-4zM51.7 624.2h4v4h-4zM36.5 637.3h4v4h-4zM56.6 642.3h4v4h-4zM114.2 637.3h4v4h-4zM124 625.5h4v4h-4zM158.2 632h4v4h-4zM155.8 634.5h4v4h-4zM152.9 635.9h4v4h-4zM139 641.8h4v4h-4zM131.4 647.6h4v4h-4zM141 659.9h4v4h-4zM170.9 642.7h4v4h-4zM183.9 665.2h4v4h-4zM50.7 647.2h4v4h-4zM56 656.8h4v4h-4zM73.2 647.2h4v4h-4zM123 655.4h4v4h-4zM220.1 469.8h4v4h-4zM222.4 472.2h4v4h-4zM227.9 477.1h4v4h-4zM230.6 475.7h4v4h-4zM234.1 471.2h4v4h-4zM231.6 465.9h4v4h-4zM256.6 469.4h4v4h-4zM238 494.2h4v4h-4zM239 554.8h4v4h-4zM239.6 555.2h4v4h-4zM242.5 554.8h4v4h-4zM246.8 549.9h4v4h-4zM245.9 500.1h4v4h-4zM313.2 498.7h4v4h-4zM453.7 516.7h4v4h-4zM470.7 520.2h4v4h-4zM258 478.6h4v4h-4zM251.1 486.8h4v4h-4zM256 486.4h4v4h-4zM414.6 497.8h4v4h-4zM471.8 515.3h4v4h-4zM330.8 509.9h4v4h-4zM334.7 508.9h4v4h-4zM350 509.3h4v4h-4zM356.2 512.2h4v4h-4zM351.7 522h4v4h-4zM337.3 521h4v4h-4zM329.4 517.7h4v4h-4zM249.4 614.4h4v4h-4zM205.4 615.8h4v4h-4zM201.5 632.4h4v4h-4zM267.9 643.7h4v4h-4zM256 600.7h4v4h-4zM276.1 616.8h4v4h-4zM274.8 639.2h4v4h-4zM300.5 630h4v4h-4zM308.9 639.8h4v4h-4zM284.5 658.9h4v4h-4zM291.2 666.2h4v4h-4zM314.8 652.9h4v4h-4zM323 658h4v4h-4zM226.7 637.8h4v4h-4zM209.1 653.5h4v4h-4zM218.1 665.2h4v4h-4zM280 663.6h4v4h-4zM306.4 594.9h4v4h-4zM304.4 596.8h4v4h-4zM304.4 601.7h4v4h-4zM306 603.7h4v4h-4zM305.4 603.3h4v4h-4zM368.3 628.1h4v4h-4zM379.6 642.7h4v4h-4zM389 644.1h4v4h-4zM396.2 654.4h4v4h-4zM419.9 520.2h4v4h-4zM423 544.1h4v4h-4zM417.5 549.9h4v4h-4zM400 547.4h4v4h-4zM386.3 545.4h4v4h-4zM380 525.9h4v4h-4zM375.3 514.2h4v4h-4zM384.3 515.1h4v4h-4zM385.5 556.4h4v4h-4zM390 556.8h4v4h-4zM427.3 566.5h4v4h-4zM428.9 578.8h4v4h-4zM389 559.7h4v4h-4zM391.4 565h4v4h-4zM491.4 519.6h4v4h-4zM495.3 532.3h4v4h-4zM548.4 517.1h4v4h-4zM640.6 520.2h4v4h-4zM568.3 529.8h4v4h-4zM652.3 532.3h4v4h-4zM650 526.9h4v4h-4zM520.7 557.3h4v4h-4zM536.7 540.5h4v4h-4zM548.4 557.3h4v4h-4zM567 557.3h4v4h-4zM575.1 542.1h4v4h-4zM583.2 557.3h4v4h-4zM600 557.3h4v4h-4zM608 542.1h4v4h-4zM616 557.3h4v4h-4zM635.6 557.3h4v4h-4zM644.4 544.4h4v4h-4zM653.2 557.3h4v4h-4zM514.8 566h4v4h-4zM517.1 560h4v4h-4zM525 557.3h4v4h-4zM651.3 557.3h4v4h-4zM657.5 562.6h4v4h-4zM656.7 566h4v4h-4zM524 566h4v4h-4zM525 583.3h4v4h-4zM532 584.3h4v4h-4zM526.9 581.9h4v4h-4zM533.3 585.8h4v4h-4zM544.8 583.3h4v4h-4zM551.8 584.3h4v4h-4zM546.7 581.9h4v4h-4zM553.1 585.8h4v4h-4zM565.2 583.3h4v4h-4zM572.2 584.3h4v4h-4zM567.1 581.9h4v4h-4zM573.5 585.8h4v4h-4zM584.8 583.3h4v4h-4zM591.8 584.3h4v4h-4zM586.7 581.9h4v4h-4zM593.1 585.8h4v4h-4zM604.6 583.3h4v4h-4zM611.6 584.3h4v4h-4zM606.5 581.9h4v4h-4zM612.9 585.8h4v4h-4zM624.6 583.3h4v4h-4zM631.6 584.3h4v4h-4zM626.5 581.9h4v4h-4zM632.9 585.8h4v4h-4zM644.6 583.3h4v4h-4zM651.6 584.3h4v4h-4zM646.5 581.9h4v4h-4zM652.9 585.8h4v4h-4zM465.6 550.5h4v4h-4zM452.3 585.1h4v4h-4zM453.7 607.6h4v4h-4zM468.5 550.3h4v4h-4zM473.8 563h4v4h-4zM467.9 623.6h4v4h-4zM428.7 578.9h4v4h-4zM427.3 596.8h4v4h-4zM399 587.1h4v4h-4zM401.9 603.1h4v4h-4zM405.8 601.3h4v4h-4zM428.7 608.5h4v4h-4zM435.1 617.7h4v4h-4zM436.1 648.2h4v4h-4zM430.6 650.5h4v4h-4zM415.6 643.7h4v4h-4zM411.3 637.3h4v4h-4zM410.3 629.4h4v4h-4zM402.9 649.6h4v4h-4zM649.9 513.2h4v4h-4zM659.4 519.1h4v4h-4zM663.9 569.8h4v4h-4zM660.6 637.4h4v4h-4zM675.7 640.1h4v4h-4zM823 479.8h4v4h-4zM801.5 479.1h4v4h-4zM813.1 479.4h4v4h-4zM813.1 453.7h4v4h-4zM835.8 466.7h4v4h-4zM835.8 476.7h4v4h-4zM819.5 447.4h4v4h-4zM841.8 457.6h4v4h-4zM841.8 459.9h4v4h-4zM841.8 448.2h4v4h-4zM850.1 452.1h4v4h-4zM850.9 462h4v4h-4zM868.1 493.9h4v4h-4zM808.6 488.1h4v4h-4zM813.6 494.7h4v4h-4zM824.1 508h4v4h-4zM834 517.9h4v4h-4zM835.8 517.9h4v4h-4zM819.5 488.1h4v4h-4zM853.6 511.7h4v4h-4zM820.6 489.2h4v4h-4zM830.8 502.7h4v4h-4zM831.9 518.7h4v4h-4zM822.7 523.1h4v4h-4zM830.5 528.9h4v4h-4zM838.7 534.8h4v4h-4zM852 544.1h4v4h-4zM864.5 553.2h4v4h-4zM840.7 525h4v4h-4zM844.2 527.8h4v4h-4zM860.6 540.2h4v4h-4zM839.9 544h4v4h-4zM852 544.5h4v4h-4zM847.8 553.5h4v4h-4zM859 553.4h4v4h-4zM869.7 584.9h4v4h-4zM733.3 645.2h4v4h-4zM745 643.7h4v4h-4zM753.6 642.1h4v4h-4zM771.2 639.8h4v4h-4zM778 640.7h4v4h-4zM784.4 638.8h4v4h-4zM819 641.1h4v4h-4zM823.5 645h4v4h-4zM832.7 646h4v4h-4zM857.1 652.1h4v4h-4zM866.1 658.7h4v4h-4zM741.9 653h4v4h-4zM752.2 650.9h4v4h-4zM755.1 650.5h4v4h-4zM771.2 648.2h4v4h-4zM787 661.2h4v4h-4zM787 662.2h4v4h-4zM792.6 645.2h4v4h-4zM814.3 648.2h4v4h-4zM823.5 662.2h4v4h-4zM799.1 650.5h4v4h-4zM836.2 655h4v4h-4zM697.5 666.1h4v4h-4zM651.1 257.1h4v4h-4zM648 249.6h4v4h-4zM676.9 252.4h4v4h-4zM705.8 255.8h4v4h-4zM711.3 257.1h4v4h-4zM710.8 258.6h4v4h-4zM704.6 264.6h4v4h-4zM700.3 265.7h4v4h-4zM678.8 262.5h4v4h-4zM654.2 259.1h4v4h-4zM647.2 248.9h4v4h-4zM619.4 258.6h4v4h-4zM616.4 261.8h4v4h-4zM615.7 266.4h4v4h-4zM615.7 270.3h4v4h-4zM616.3 271.9h4v4h-4zM619.4 275.3h4v4h-4zM639.9 261.8h4v4h-4zM697.7 269.9h4v4h-4zM709.7 271.4h4v4h-4zM710.2 272.7h4v4h-4zM699.6 285.2h4v4h-4zM694.4 287.1h4v4h-4zM708.9 272.1h4v4h-4zM754.2 272.7h4v4h-4zM759.7 263.3h4v4h-4zM766 264.4h4v4h-4zM783.6 272.4h4v4h-4zM787.5 268.8h4v4h-4zM788.6 267.2h4v4h-4zM787.5 268h4v4h-4zM841 273.9h4v4h-4zM780.5 277.4h4v4h-4zM792.5 275.5h4v4h-4zM796.9 278.6h4v4h-4zM808.9 280h4v4h-4zM846.1 285.2h4v4h-4zM864.4 287.8h4v4h-4zM762.2 282.4h4v4h-4zM761.3 296.1h4v4h-4z"/>
<rect x="571" y="134.400" width="5.600" height="5.600" fill="#4470d8"/>
<text x="578.700" y="134.400" font-size="7.600" fill="#ee86d8" textLength="16.400" lengthAdjust="spacingAndGlyphs" font-family="Liberation Sans, sans-serif">path</text>
</svg>
</div>
<div class="r" style="left:0px;top:72.7px;width:886.5px;height:1.3px;background:#303030;"></div>
<div class="r" style="left:873.3px;top:74px;width:13.2px;height:594.5px;background:#484848;"></div>
<svg style="left:873px;top:73px" width="14" height="596"><path d="M3 10 L6.500 6.500 L10 10" stroke="#8c8c8c" stroke-width="1.200" fill="none"/><rect x="1.500" y="146" width="11" height="19" rx="5.500" fill="#5d5d5d"/><path d="M3 587 L6.500 590.500 L10 587" stroke="#8c8c8c" stroke-width="1.200" fill="none"/></svg>
<div class="r" style="left:0px;top:668.5px;width:886.5px;height:14.5px;background:#505050;"></div>
<div class="r" style="left:305px;top:668.5px;width:568px;height:12.5px;background:#4a4a4a;"></div>
<div class="r" style="left:596px;top:671.5px;width:22px;height:9px;background:#5d5d5d;border-radius:4.500px;"></div>
<div class="r" style="left:0px;top:669px;width:6.3px;height:12.5px;background:#484848;"></div>
<div class="r" style="left:6.3px;top:669px;width:13.2px;height:12.5px;background:#555555;"></div>
<div class="r" style="left:54px;top:669px;width:31.6px;height:12.5px;background:#484848;"></div>
<div class="r" style="left:85.6px;top:669px;width:13.2px;height:12.5px;background:#555555;"></div>
<div class="r" style="left:0px;top:680.9px;width:1024px;height:2.1px;background:#423d3a;"></div>
<svg style="left:0;top:668px" width="886" height="15" viewBox="0 668 886 15"><g stroke="#e0e0e0" stroke-width="1.300" fill="none"><path d="M10 675.200 L13 678.200 L16 675.200"/><path d="M89.200 675.200 L92.200 678.200 L95.200 675.200"/></g><g fill="#6c6c6c"><path d="M33.600 673 v7.200 l-5-3.600z"/><rect x="27.300" y="673" width="1.400" height="7.200"/><path d="M46.600 673 v7.200 l-4.700-3.600z"/><path d="M107.800 673 v7.200 l4.700-3.600z"/><path d="M119.500 673 v7.200 l5-3.600z"/><rect x="124.500" y="673" width="1.400" height="7.200"/></g><path d="M296.300 673 v6.600 l4.200-3.300z" fill="#e0e0e0"/><path d="M313 673.500 L310 676.500 L313 679.500" stroke="#8c8c8c" stroke-width="1.200" fill="none"/><path d="M865 673.500 L868 676.500 L865 679.500" stroke="#8c8c8c" stroke-width="1.200" fill="none"/></svg>
<div class="r" style="left:886.5px;top:52px;width:137.5px;height:631px;background:#404040;"></div>
<div class="r" style="left:886.5px;top:52px;width:137.5px;height:9px;background:#474747;"></div>
<div class="r" style="left:888.5px;top:60.5px;width:30px;height:620.3px;background:#525252;"></div>
<div class="r" style="left:921px;top:60.5px;width:103px;height:620.3px;background:#535353;"></div>
<div class="r" style="left:973.5px;top:60.5px;width:50.5px;height:21.5px;background:#464646;"></div>
<div class="r" style="left:921px;top:82px;width:5px;height:598.8px;background:#4f4f4f;"></div>
<div class="r" style="left:926px;top:107px;width:98px;height:1px;background:#474747;"></div>
<div class="r" style="left:966.5px;top:134px;width:41.5px;height:14px;background:#474747;"></div>
<div class="r" style="left:966.5px;top:155px;width:41.5px;height:14px;background:#474747;"></div>
<div class="r" style="left:966.5px;top:175px;width:27.5px;height:14px;background:#474747;"></div>
<div class="r" style="left:995px;top:175px;width:13px;height:14px;background:#4a4a4a;"></div>
<div class="r" style="left:926px;top:208.2px;width:98px;height:1px;background:#474747;"></div>
<div class="r" style="left:986px;top:260.5px;width:13px;height:14px;background:#4a4a4a;"></div>
<div class="r" style="left:999.5px;top:260.5px;width:25px;height:14px;background:#474747;"></div>
<div class="r" style="left:985.5px;top:283px;width:39px;height:14px;background:#474747;"></div>
<div class="r" style="left:926px;top:342.3px;width:98px;height:1px;background:#474747;"></div>
<div class="r" style="left:926px;top:410.5px;width:98px;height:1px;background:#474747;"></div>
<div class="r" style="left:926px;top:474.5px;width:98px;height:1px;background:#474747;"></div>
<div class="r" style="left:928px;top:505.3px;width:79.2px;height:16.3px;background:transparent;border:1px solid #727272;border-radius:2px;"></div>
<div class="r" style="left:1015.3px;top:505.3px;width:20px;height:16.3px;background:transparent;border:1px solid #727272;border-radius:2px;"></div>
<div class="r" style="left:928px;top:529.7px;width:110px;height:16px;background:transparent;border:1px solid #727272;border-radius:2px;"></div>
<svg style="left:886px;top:52px" width="138" height="631" viewBox="886 52 138 631"><path d="M910.5 53.500l-2.200 2.200l2.200 2.200M914 53.500l-2.200 2.200l2.200 2.200" fill="none" stroke="#b0b0b0" stroke-width="1"/>
<rect x="888.500" y="113.9" width="30" height="1.200" fill="#404040"/>
<rect x="888.500" y="189.9" width="30" height="1.200" fill="#404040"/>
<rect x="888.500" y="267.4" width="30" height="1.200" fill="#404040"/>
<rect x="888.500" y="320.9" width="30" height="1.200" fill="#404040"/>
<rect x="888.500" y="399.1" width="30" height="1.200" fill="#404040"/>
<rect x="888.500" y="452.8" width="30" height="1.200" fill="#404040"/>
<path d="M896.500 64.8h14.500" stroke="#444" stroke-width="1.400" stroke-dasharray="1 1"/>
<path d="M896.500 118.6h14.500" stroke="#444" stroke-width="1.400" stroke-dasharray="1 1"/>
<path d="M896.500 194.8h14.500" stroke="#444" stroke-width="1.400" stroke-dasharray="1 1"/>
<path d="M896.500 272.6h14.500" stroke="#444" stroke-width="1.400" stroke-dasharray="1 1"/>
<path d="M896.500 326.5h14.500" stroke="#444" stroke-width="1.400" stroke-dasharray="1 1"/>
<path d="M896.500 403.5h14.500" stroke="#444" stroke-width="1.400" stroke-dasharray="1 1"/>
<path d="M896.500 458.0h14.500" stroke="#444" stroke-width="1.400" stroke-dasharray="1 1"/>
<rect x="888.500" y="486.500" width="30" height="1.200" fill="#404040"/>
<rect x="888.500" y="487.700" width="30" height="193.100" fill="#4f4f4f"/>
<path d="M904.500 73.500c4.500 0 7.300 2.300 7.300 5.200c0 2-1.600 2.800-3.200 2.600c-1.300-0.200-2.100 0.300-2 1.100c0.100 0.900-0.700 1.400-2.300 1.400c-4.300 0-7.600-2.200-7.600-5.300c0-2.800 3.400-5 7.800-5z" fill="#d4d4d4"/>
<circle cx="900.2" cy="78.6" r="1.100" fill="#535353"/>
<circle cx="902.6" cy="76.2" r="1.100" fill="#535353"/>
<circle cx="906" cy="75.6" r="1.100" fill="#535353"/>
<circle cx="909" cy="77.2" r="1.100" fill="#535353"/>
<circle cx="901.5" cy="81.2" r="1.100" fill="#535353"/>
<defs><linearGradient id="cg" x1="0" y1="0.200" x2="0.800" y2="1"><stop offset="0" stop-color="#161616"/><stop offset="0.550" stop-color="#9a9a9a"/><stop offset="1" stop-color="#f2f2f2"/></linearGradient><linearGradient id="gr" x1="0" y1="0" x2="1" y2="0"><stop offset="0" stop-color="#1c1c1c"/><stop offset="1" stop-color="#e4e4e4"/></linearGradient></defs>
<path d="M898.500 95.500A12.200 12.200 0 0 1 910.700 107.300L898.500 107.300z" fill="url(#cg)" stroke="#d8d8d8" stroke-width="0.800"/>
<rect x="897.3" y="129.8" width="14.4" height="8.7" fill="#d4d4d4" />
<rect x="898.6" y="131.0" width="2.200" height="2.600" fill="#6a6a6a"/>
<rect x="898.6" y="134.8" width="2.200" height="2.600" fill="#8a8a8a"/>
<rect x="901.9" y="131.0" width="2.200" height="2.600" fill="#8a8a8a"/>
<rect x="901.9" y="134.8" width="2.200" height="2.600" fill="#9c9c9c"/>
<rect x="905.2" y="131.0" width="2.200" height="2.600" fill="#9c9c9c"/>
<rect x="905.2" y="134.8" width="2.200" height="2.600" fill="#7a7a7a"/>
<rect x="908.5" y="131.0" width="2.200" height="2.600" fill="#7a7a7a"/>
<rect x="908.5" y="134.8" width="2.200" height="2.600" fill="#6a6a6a"/>
<path d="M900.500 157.500h8.500v6.200h-8.500z" fill="#d4d4d4"/>
<path d="M902.300 157.500l-0.800-5.500l0.900-3.200l1 3.200l0.300 5.500zM904.300 157.500l0.300-7l1.200 0l0.300 7zM907 157.500l1.200-4.500l2.800-2.300l0.800 0.800l-2.600 2.600l-0.800 3.400zM899.800 157l-1.300-3.300l0.800-0.300l1.500 3.300z" fill="#d4d4d4"/>
<circle cx="904.5" cy="174.3" r="3.100" fill="#d4d4d4"/>
<circle cx="901.2" cy="178.3" r="3.100" fill="#d4d4d4"/>
<circle cx="907.8" cy="178.3" r="3.100" fill="#d4d4d4"/>
<path d="M904 177h1l0.600 4.200l1.800 1.800h-5.800l1.800-1.800z" fill="#d4d4d4"/>
<rect x="898.0" y="205.5" width="13.7" height="2.0" fill="#d4d4d4" />
<rect x="898.0" y="209.6" width="13.7" height="2.0" fill="#d4d4d4" />
<rect x="898.0" y="213.7" width="13.7" height="2.0" fill="#d4d4d4" />
<rect x="897.800" y="227.500" width="13.400" height="9.500" fill="url(#gr)" stroke="#dcdcdc" stroke-width="1"/>
<circle cx="902" cy="252.700" r="5.200" fill="#cfcfcf"/><circle cx="905.600" cy="256.800" r="5.400" fill="#8a8a8a" stroke="#c4c4c4" stroke-width="0.900"/>
<circle cx="904.500" cy="287" r="5" fill="#d0d0d0"/><circle cx="904.500" cy="287" r="7.400" fill="none" stroke="#cfcfcf" stroke-width="1.200" stroke-dasharray="1.300 1.600"/>
<rect x="901.3" y="304.5" width="10.0" height="9.3" fill="none" stroke="#d4d4d4" stroke-width="1.1" />
<rect x="897.8" y="309.2" width="6.4" height="6.6" fill="#535353" stroke="#d4d4d4" stroke-width="1" />
<rect x="899.6" y="311.0" width="2.8" height="3.0" fill="#a8a8a8" />
<path d="M904.500 335.700l7 3.800l-7 3.800l-7-3.800z" fill="#d4d4d4"/><path d="M898.200 342.800l6.300 3.600l6.300-3.600" fill="none" stroke="#d4d4d4" stroke-width="1.600"/>
<path d="M903 358.700h-4.600v11.300h11.300v-4.600" fill="none" stroke="#d4d4d4" stroke-width="1.400"/><path d="M904 364.300l6.800-6.800M905.800 357.300h5.200v5.200" fill="none" stroke="#d4d4d4" stroke-width="1.400"/>
<rect x="896.4" y="378.4" width="9.6" height="9.6" fill="none" stroke="#d4d4d4" stroke-width="1.1" />
<rect x="900.5" y="383.0" width="10.7" height="10.0" fill="#535353" stroke="#d4d4d4" stroke-width="1.1" />
<rect x="899.3" y="413.8" width="9.9" height="9.6" fill="none" stroke="#bcbcbc" stroke-width="0.9" stroke-dasharray="1.200 1"/>
<rect x="898.1" y="412.6" width="2.400" height="2.400" fill="#d4d4d4"/>
<rect x="898.1" y="417.4" width="2.400" height="2.400" fill="#d4d4d4"/>
<rect x="898.1" y="422.2" width="2.400" height="2.400" fill="#d4d4d4"/>
<rect x="903.0" y="412.6" width="2.400" height="2.400" fill="#d4d4d4"/>
<rect x="903.0" y="422.2" width="2.400" height="2.400" fill="#d4d4d4"/>
<rect x="908.0" y="412.6" width="2.400" height="2.400" fill="#d4d4d4"/>
<rect x="908.0" y="417.4" width="2.400" height="2.400" fill="#d4d4d4"/>
<rect x="908.0" y="422.2" width="2.400" height="2.400" fill="#d4d4d4"/>
<rect x="897.800" y="433" width="1.300" height="13.800" fill="#d4d4d4"/>
<rect x="900.0" y="435.0" width="5.6" height="4.3" fill="#d4d4d4" />
<rect x="900.0" y="441.0" width="10.8" height="4.3" fill="#d4d4d4" />
<rect x="898.0" y="466.3" width="8.0" height="8.0" fill="#d4d4d4" />
<rect x="902.5" y="471.0" width="8.1" height="8.0" fill="#9a9a9a" stroke="#d8d8d8" stroke-width="0.9" />
<rect x="928.5" y="143.5" width="3.400" height="3.400" fill="none" stroke="#d0d0d0" stroke-width="0.900"/>
<rect x="928.5" y="149.7" width="3.400" height="3.400" fill="none" stroke="#d0d0d0" stroke-width="0.900"/>
<rect x="928.5" y="155.9" width="3.400" height="3.400" fill="none" stroke="#d0d0d0" stroke-width="0.900"/>
<rect x="934.7" y="143.5" width="3.400" height="3.400" fill="none" stroke="#d0d0d0" stroke-width="0.900"/>
<rect x="934.5" y="149.5" width="3.800" height="3.800" fill="#f4f4f4"/>
<rect x="934.7" y="155.9" width="3.400" height="3.400" fill="none" stroke="#d0d0d0" stroke-width="0.900"/>
<rect x="940.9" y="143.5" width="3.400" height="3.400" fill="none" stroke="#d0d0d0" stroke-width="0.900"/>
<rect x="940.9" y="149.7" width="3.400" height="3.400" fill="none" stroke="#d0d0d0" stroke-width="0.900"/>
<rect x="940.9" y="155.9" width="3.400" height="3.400" fill="none" stroke="#d0d0d0" stroke-width="0.900"/>
<path d="M932 145.200h2.600M938.200 145.200h2.600M932 157.600h2.600M938.200 157.600h2.600M930.200 147v2.600M930.200 153.200v2.600M942.600 147v2.600M942.600 153.200v2.600" stroke="#bdbdbd" stroke-width="0.800"/>
<path d="M951 183.400L957 177.300L960 183.400Z" fill="none" stroke="#d0d0d0" stroke-width="1"/><rect x="961.800" y="178.800" width="1.100" height="1.300" fill="#c8c8c8"/><rect x="961.800" y="182.300" width="1.100" height="1.300" fill="#c8c8c8"/>
<path d="M998.500 180.500l3 3l3-3" fill="none" stroke="#e2e2e2" stroke-width="1.200"/>
<rect x="929" y="238.300" width="13" height="12.600" fill="#fbfbfb" stroke="#b8b0b0" stroke-width="0.700"/><path d="M929.300 250.600L941.700 238.600" stroke="#e23030" stroke-width="1.300"/>
<rect x="929" y="261" width="13" height="12.800" fill="#0e0e0e" stroke="#d8d8d8" stroke-width="0.900"/><rect x="932.600" y="264.500" width="5.800" height="5.800" fill="#3c3c3c" stroke="#cfcfcf" stroke-width="0.900"/>
<path d="M952 272.800h22.400M952 295.800h25.600" stroke="#bcbcbc" stroke-width="0.800" stroke-dasharray="1 1"/>
<path d="M989.700 265.500l3-3l3 3M989.700 270l3 3l3-3" fill="none" stroke="#e2e2e2" stroke-width="1.200"/>
<rect x="929" y="284.200" width="13" height="12.400" fill="#6c6c6c" stroke="#c4c4c4" stroke-width="0.900"/>
<rect x="929.8" y="285.0" width="3.800" height="3.600" fill="#7c7c7c"/>
<rect x="929.8" y="292.2" width="3.800" height="3.600" fill="#7c7c7c"/>
<rect x="933.6" y="288.6" width="3.800" height="3.600" fill="#7c7c7c"/>
<rect x="937.4" y="285.0" width="3.800" height="3.600" fill="#7c7c7c"/>
<rect x="937.4" y="292.2" width="3.800" height="3.600" fill="#7c7c7c"/>
<rect x="930.4" y="373.4" width="1.700" height="1.700" fill="#d6d6d6"/>
<rect x="930.4" y="378.9" width="1.700" height="1.700" fill="#d6d6d6"/>
<rect x="930.4" y="384.4" width="1.700" height="1.700" fill="#d6d6d6"/>
<rect x="935.9" y="373.4" width="1.700" height="1.700" fill="#d6d6d6"/>
<rect x="935.9" y="378.9" width="1.700" height="1.700" fill="#d6d6d6"/>
<rect x="935.9" y="384.4" width="1.700" height="1.700" fill="#d6d6d6"/>
<rect x="941.4" y="373.4" width="1.700" height="1.700" fill="#d6d6d6"/>
<rect x="941.4" y="378.9" width="1.700" height="1.700" fill="#d6d6d6"/>
<rect x="941.4" y="384.4" width="1.700" height="1.700" fill="#d6d6d6"/>
<path d="M931.3 374.3h11.0v11.0h-11.0z" fill="none" stroke="#bdbdbd" stroke-width="0.800" stroke-dasharray="1 1.200"/>
<path d="M944.600 379.200l2.300 2.300l2.300-2.300" fill="none" stroke="#d6d6d6" stroke-width="1"/>
<rect x="960.1" y="372.5" width="1" height="14.2" fill="#d2d2d2"/>
<rect x="962.8" y="374.5" width="5.8" height="4.2" fill="#c6c6c6"/>
<rect x="962.8" y="380.4" width="9.5" height="3.8" fill="#c6c6c6"/>
<rect x="989.7" y="372.5" width="1" height="14.2" fill="#d2d2d2"/>
<rect x="987.2" y="374.5" width="6.3" height="4.2" fill="#c6c6c6"/>
<rect x="985.5" y="380.4" width="9.5" height="3.8" fill="#c6c6c6"/>
<rect x="1020.1" y="372.5" width="1" height="14.2" fill="#d2d2d2"/>
<rect x="1013.3" y="374.5" width="5.6" height="4.2" fill="#c6c6c6"/>
<rect x="1008.9" y="380.4" width="10.0" height="3.8" fill="#c6c6c6"/>
<rect x="933.0" y="442.4" width="7.4" height="7.4" fill="#d2d2d2" />
<rect x="936.8" y="446.0" width="7.4" height="7.4" fill="#d2d2d2" />
<rect x="957.3" y="442.4" width="7.4" height="7.4" fill="#d2d2d2" />
<rect x="961.4" y="446.2" width="7.2" height="7.0" fill="#535353" stroke="#d2d2d2" stroke-width="1" />
<rect x="982.3" y="442.9" width="7.0" height="7.0" fill="none" stroke="#d2d2d2" stroke-width="1" />
<rect x="985.9" y="446.4" width="6.8" height="6.6" fill="none" stroke="#d2d2d2" stroke-width="1" />
<rect x="985.9" y="446.4" width="3.4" height="3.5" fill="#d2d2d2" />
<rect x="1006.3" y="442.4" width="7.4" height="7.4" fill="#d2d2d2" />
<rect x="1010.1" y="446.0" width="7.6" height="7.4" fill="#d2d2d2" />
<rect x="1010.6" y="446.5" width="2.6" height="2.8" fill="#535353" />
</svg>
<svg style="left:0;top:0;filter:grayscale(1)" width="1024" height="683" font-family="Liberation Sans, sans-serif"><text x="2.3" y="15.1" font-size="9.9" fill="#e6e6e6" textLength="15.4" lengthAdjust="spacingAndGlyphs">Edit</text><rect x="2.5" y="16.3" width="5.6" height="0.900" fill="#e6e6e6"/><text x="29.5" y="15.1" font-size="9.9" fill="#e6e6e6" textLength="28.2" lengthAdjust="spacingAndGlyphs">Object</text><rect x="29.7" y="16.3" width="7.2" height="0.900" fill="#e6e6e6"/><text x="69.3" y="15.1" font-size="9.9" fill="#e6e6e6" textLength="20.4" lengthAdjust="spacingAndGlyphs">Type</text><rect x="69.5" y="16.3" width="5.3" height="0.900" fill="#e6e6e6"/><text x="100.5" y="15.1" font-size="9.9" fill="#e6e6e6" textLength="25.2" lengthAdjust="spacingAndGlyphs">Select</text><rect x="100.7" y="16.3" width="5.6" height="0.900" fill="#e6e6e6"/><text x="137.0" y="15.1" font-size="9.9" fill="#e6e6e6" textLength="23.2" lengthAdjust="spacingAndGlyphs">Effect</text><rect x="153.3" y="16.3" width="4.2" height="0.900" fill="#e6e6e6"/><text x="171.8" y="15.1" font-size="9.9" fill="#e6e6e6" textLength="20.4" lengthAdjust="spacingAndGlyphs">View</text><rect x="172.0" y="16.3" width="5.9" height="0.900" fill="#e6e6e6"/><text x="203.0" y="15.1" font-size="9.9" fill="#e6e6e6" textLength="35.3" lengthAdjust="spacingAndGlyphs">Window</text><rect x="203.2" y="16.3" width="9.0" height="0.900" fill="#e6e6e6"/><text x="249.0" y="15.1" font-size="9.9" fill="#e6e6e6" textLength="20.2" lengthAdjust="spacingAndGlyphs">Help</text><rect x="249.2" y="16.3" width="6.7" height="0.900" fill="#e6e6e6"/><text x="807.2" y="14.3" font-size="9.5" fill="#e2e2e2" textLength="69.8" lengthAdjust="spacingAndGlyphs">Essentials Classic</text><svg style="overflow:hidden" x="911" y="4" width="65" height="8.5" viewBox="911 4 65 8.5"><text x="929.0" y="15.2" font-size="9.3" fill="#858585" textLength="75.0" lengthAdjust="spacingAndGlyphs">Search Adobe Stock</text></svg><text x="54.8" y="41.2" font-size="9.4" fill="#dedede" textLength="24.9" lengthAdjust="spacingAndGlyphs">Stroke:</text><path d="M54.8 43.8H79.7" stroke="#dedede" stroke-width="0.900" stroke-dasharray="1 1" opacity="0.850"/><text x="100.9" y="41.2" font-size="9.4" fill="#f0f0f0" textLength="21.0" lengthAdjust="spacingAndGlyphs">0.5 pt</text><text x="193.0" y="41.7" font-size="8.6" fill="#4c4c4c" textLength="27.7" lengthAdjust="spacingAndGlyphs">Uniform</text><text x="289.7" y="41.7" font-size="8.6" fill="#4c4c4c" textLength="18.2" lengthAdjust="spacingAndGlyphs">Basic</text><text x="332.0" y="41.2" font-size="9.4" fill="#dedede" textLength="27.9" lengthAdjust="spacingAndGlyphs">Opacity:</text><path d="M332.0 43.8H359.9" stroke="#dedede" stroke-width="0.900" stroke-dasharray="1 1" opacity="0.850"/><text x="367.9" y="41.2" font-size="9.4" fill="#f0f0f0" textLength="20.0" lengthAdjust="spacingAndGlyphs">100%</text><text x="424.9" y="41.2" font-size="9.4" fill="#cdcdcd" textLength="18.3" lengthAdjust="spacingAndGlyphs">Style:</text><text x="520.4" y="41.2" font-size="9.4" fill="#dedede" textLength="29.3" lengthAdjust="spacingAndGlyphs">Corners:</text><path d="M520.4 43.8H549.7" stroke="#dedede" stroke-width="0.900" stroke-dasharray="1 1" opacity="0.850"/><text x="921.4" y="41.2" font-size="9.4" fill="#ececec" textLength="34.8" lengthAdjust="spacingAndGlyphs">Transform</text><path d="M921.4 43.8H956.2" stroke="#ececec" stroke-width="0.900" stroke-dasharray="1 1" opacity="0.850"/><text x="-5.2" y="66.7" font-size="8.2" fill="#b0b0b0" textLength="177.4" lengthAdjust="spacingAndGlyphs" font-weight="bold">ents recovered.ai* @ 6.25% (CMYK/Preview)</text><text x="204.6" y="66.7" font-size="8.2" fill="#f6f6f6" textLength="168.6" lengthAdjust="spacingAndGlyphs" font-weight="bold">north dakota* @ 66.67% (CMYK/Preview)</text><text x="407.8" y="66.7" font-size="8.2" fill="#b0b0b0" textLength="182.6" lengthAdjust="spacingAndGlyphs" font-weight="bold">18 inch tractor.dxf* @ 51.06% (RGB/Preview)</text><text x="622.1" y="66.7" font-size="8.2" fill="#b0b0b0" textLength="190.6" lengthAdjust="spacingAndGlyphs" font-weight="bold">20 inch combine.dxf* @ 51.06% (RGB/Preview)</text><text x="56.3" y="679.8" font-size="8.6" fill="#f2f2f2" textLength="3.5" lengthAdjust="spacingAndGlyphs">1</text><text x="184.3" y="679.8" font-size="8.6" fill="#d6d6d6" textLength="54.6" lengthAdjust="spacingAndGlyphs">Direct Selection</text><text x="928.3" y="74.8" font-size="8.6" fill="#ffffff" textLength="38.2" lengthAdjust="spacingAndGlyphs" font-weight="bold">Properties</text><text x="980.3" y="74.8" font-size="8.6" fill="#a2a2a2" textLength="32.0" lengthAdjust="spacingAndGlyphs" font-weight="bold">Libraries</text><text x="928.3" y="98.7" font-size="8.8" fill="#d0d0d0" textLength="15.6" lengthAdjust="spacingAndGlyphs">Path</text><text x="928.3" y="124.2" font-size="8.8" fill="#d0d0d0" textLength="34.9" lengthAdjust="spacingAndGlyphs">Transform</text><text x="955.3" y="143.9" font-size="8.8" fill="#c8c8c8" textLength="6.6" lengthAdjust="spacingAndGlyphs">X:</text><text x="955.3" y="164.8" font-size="8.8" fill="#c8c8c8" textLength="6.6" lengthAdjust="spacingAndGlyphs">Y:</text><text x="968.6" y="143.9" font-size="8.8" fill="#f4f4f4" textLength="33.0" lengthAdjust="spacingAndGlyphs">42.907 in</text><text x="967.9" y="164.8" font-size="8.8" fill="#f4f4f4" textLength="35.9" lengthAdjust="spacingAndGlyphs">-26.589 in</text><text x="967.5" y="185.0" font-size="8.8" fill="#f4f4f4" textLength="7.5" lengthAdjust="spacingAndGlyphs">0°</text><text x="1021.2" y="143.9" font-size="8.8" fill="#c8c8c8" textLength="8.8" lengthAdjust="spacingAndGlyphs">W</text><text x="1021.2" y="164.8" font-size="8.8" fill="#c8c8c8" textLength="6.8" lengthAdjust="spacingAndGlyphs">H</text><text x="928.3" y="226.8" font-size="8.8" fill="#d0d0d0" textLength="41.2" lengthAdjust="spacingAndGlyphs">Appearance</text><text x="952.0" y="248.2" font-size="8.8" fill="#d0d0d0" textLength="9.5" lengthAdjust="spacingAndGlyphs">Fill</text><text x="952.0" y="271.0" font-size="8.8" fill="#e4e4e4" textLength="22.4" lengthAdjust="spacingAndGlyphs">Stroke</text><text x="952.0" y="294.1" font-size="8.8" fill="#e4e4e4" textLength="25.7" lengthAdjust="spacingAndGlyphs">Opacity</text><text x="1001.6" y="270.8" font-size="8.8" fill="#f4f4f4" textLength="20.1" lengthAdjust="spacingAndGlyphs">0.5 pt</text><text x="987.6" y="293.9" font-size="8.8" fill="#f4f4f4" textLength="20.2" lengthAdjust="spacingAndGlyphs">100%</text><text x="934" y="316.3" font-size="10.800" fill="#d8d8d8" font-style="italic" textLength="11" lengthAdjust="spacingAndGlyphs">fx.</text><text x="928.3" y="360.0" font-size="8.8" fill="#d0d0d0" textLength="16.1" lengthAdjust="spacingAndGlyphs">Align</text><text x="928.3" y="427.9" font-size="8.8" fill="#d0d0d0" textLength="35.2" lengthAdjust="spacingAndGlyphs">Pathfinder</text><text x="928.1" y="496.0" font-size="8.8" fill="#d0d0d0" textLength="46.9" lengthAdjust="spacingAndGlyphs">Quick Actions</text><text x="948.4" y="517.0" font-size="8.8" fill="#ececec" textLength="38.9" lengthAdjust="spacingAndGlyphs">Offset Path</text><text x="998.7" y="541.8" font-size="8.8" fill="#ececec" textLength="27.3" lengthAdjust="spacingAndGlyphs">Recolor</text></svg>
</body></html>
